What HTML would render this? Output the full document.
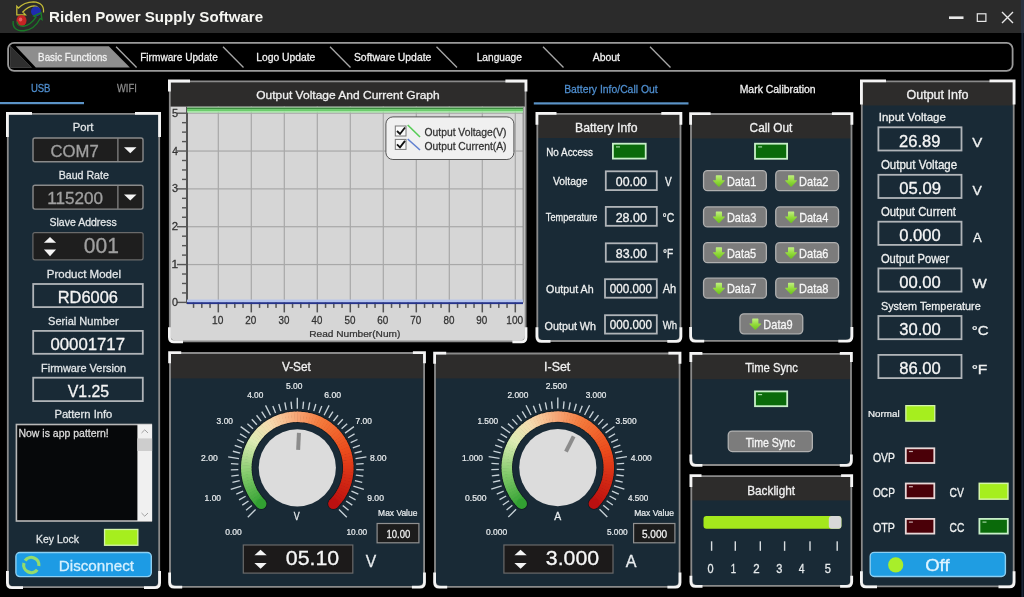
<!DOCTYPE html>
<html><head><meta charset="utf-8"><title>Riden Power Supply Software</title>
<style>html,body{margin:0;padding:0;background:#000;width:1024px;height:597px;overflow:hidden}
svg{display:block;will-change:transform} text{font-family:"Liberation Sans",sans-serif}</style></head>
<body><svg width="1024" height="597" viewBox="0 0 1024 597">
<defs><linearGradient id="garr" x1="0" y1="0" x2="0" y2="1"><stop offset="0" stop-color="#c0f080"/><stop offset="0.5" stop-color="#94dc3c"/><stop offset="1" stop-color="#6cc020"/></linearGradient></defs>
<rect x="0.00" y="0.00" width="1024.00" height="597.00" fill="#000"/>
<rect x="0.00" y="0.00" width="1024.00" height="33.00" fill="#2b2b2b"/>
<rect x="1021.00" y="33.00" width="3.00" height="564.00" fill="#0c1420"/>
<rect x="1021.00" y="0.00" width="3.00" height="33.00" fill="#2a3240"/>
<rect x="1022.00" y="33.00" width="1.00" height="564.00" fill="#1a2434"/>
<g fill="none">
<path d="M43.5,12.5 Q44.5,2.5 33.5,1.8 Q24,2 18.5,8 L16.8,6.2 L16.8,14.8 L25.5,14.8 L22.8,12 Q28,6.2 34,5.8 Q39.5,6 39.8,12.5" stroke="#c4bc38" stroke-width="1.25"/>
<circle cx="36" cy="11.5" r="5" fill="#1e2cb0"/>
<ellipse cx="21.5" cy="20.5" rx="5" ry="5.5" fill="#c42424"/><ellipse cx="20.5" cy="19.5" rx="1.8" ry="2" fill="#e86060"/>
<path d="M13.2,21 Q12,31 24,30.8 Q34.5,29.5 40.2,18.5 L42,19.6 L41,12.8 L33.8,16 L36,17.2 Q30.5,25.5 23.5,26.3 Q17.5,26.5 17,21.5" stroke="#1a7a28" stroke-width="1.4"/>
</g>
<rect x="949.00" y="16.40" width="14.50" height="2.60" fill="#e8e8e8"/>
<rect x="977.30" y="13.80" width="8.60" height="7.60" fill="none" stroke="#e8e8e8" stroke-width="1.2"/>
<path d="M1002,12 L1013,23 M1013,12 L1002,23" fill="none" stroke="#e8e8e8" stroke-width="1.4"/>
<rect x="8.10" y="42.80" width="1004.50" height="28.00" rx="6" fill="none" stroke="#9a9a9a" stroke-width="1.8"/>
<path d="M10.4,46.2 L10.4,67.5 L31.5,67.5 Z" fill="#2e2e2e" stroke="#555" stroke-width="0.6"/>
<path d="M15.8,46.2 L108.8,46.2 L129.9,67.5 L35.8,67.5 Z" fill="#8e8e8e"/>
<path d="M116.1,46.7 L136.6,67.5" fill="none" stroke="#a8a8a8" stroke-width="1.3"/>
<path d="M223,46.7 L243.5,67.5" fill="none" stroke="#a8a8a8" stroke-width="1.3"/>
<path d="M330,46.7 L350.5,67.5" fill="none" stroke="#a8a8a8" stroke-width="1.3"/>
<path d="M436.5,46.7 L457.0,67.5" fill="none" stroke="#a8a8a8" stroke-width="1.3"/>
<path d="M543,46.7 L563.5,67.5" fill="none" stroke="#a8a8a8" stroke-width="1.3"/>
<path d="M650,46.7 L670.5,67.5" fill="none" stroke="#a8a8a8" stroke-width="1.3"/>
<rect x="0.00" y="102.00" width="84.00" height="2.20" fill="#5b93c7"/>
<path d="M7.8,113.8 L159.2,113.8 L159.2,581.2 Q159.2,587.2 153.2,587.2 L13.8,587.2 Q7.8,587.2 7.8,581.2 Z" fill="#192a36"/>
<path d="M7.8,113.8 L159.2,113.8 L159.2,581.2 Q159.2,587.2 153.2,587.2 L13.8,587.2 Q7.8,587.2 7.8,581.2 Z" fill="none" stroke="#8a8a8a" stroke-width="1.8"/>
<path d="M7.4,137 L7.4,113.4 L32,113.4" fill="none" stroke="#f4f4f4" stroke-width="2.8"/>
<path d="M135,113.4 L159.6,113.4 L159.6,137" fill="none" stroke="#f4f4f4" stroke-width="2.8"/>
<path d="M7.4,571 L7.4,583 Q7.4,587.6 12,587.6 L23,587.6" fill="none" stroke="#f4f4f4" stroke-width="2.8"/>
<path d="M144,587.6 L155,587.6 Q159.6,587.6 159.6,583 L159.6,571" fill="none" stroke="#f4f4f4" stroke-width="2.8"/>
<rect x="33.00" y="138.00" width="110.00" height="23.80" rx="2" fill="#1e1e1e" stroke="#8a8a8a" stroke-width="1.4"/>
<rect x="117.30" y="138.30" width="1.20" height="23.20" fill="#8a8a8a"/>
<path d="M124,147.3 L136.5,147.3 L130.25,153.3 Z" fill="#f4f4f4"/>
<rect x="33.00" y="185.30" width="110.00" height="23.80" rx="2" fill="#1e1e1e" stroke="#8a8a8a" stroke-width="1.4"/>
<rect x="117.30" y="185.60" width="1.20" height="23.20" fill="#8a8a8a"/>
<path d="M124,194.6 L136.5,194.6 L130.25,200.6 Z" fill="#f4f4f4"/>
<rect x="32.90" y="232.60" width="110.20" height="27.20" rx="2" fill="#1e1e1e" stroke="#6a6a6a" stroke-width="1.2"/>
<path d="M43.9,242.8 L56.1,242.8 L50,237 Z" fill="#f4f4f4"/>
<path d="M43.9,249.5 L56.1,249.5 L50,256.2 Z" fill="#f4f4f4"/>
<rect x="33.20" y="284.00" width="109.60" height="23.10" fill="none" stroke="#b0b4b8" stroke-width="1.8"/>
<rect x="33.20" y="330.90" width="109.60" height="22.90" fill="none" stroke="#b0b4b8" stroke-width="1.8"/>
<rect x="33.20" y="377.70" width="109.60" height="23.40" fill="none" stroke="#b0b4b8" stroke-width="1.8"/>
<rect x="16.40" y="424.50" width="134.90" height="96.50" fill="#06080a" stroke="#b8b8b8" stroke-width="1.6"/>
<rect x="137.40" y="424.50" width="14.70" height="96.50" fill="#f0f0f0"/>
<rect x="137.40" y="438.40" width="14.70" height="12.60" fill="#cdcdcd"/>
<path d="M141.5,433 L144.75,429.8 L148,433" fill="none" stroke="#a0a0a0" stroke-width="1"/>
<path d="M141.5,513 L144.75,516.2 L148,513" fill="none" stroke="#a0a0a0" stroke-width="1"/>
<rect x="104.55" y="529.45" width="33.30" height="15.80" fill="#a6ee1e" stroke="#d4f4a8" stroke-width="1.3"/>
<rect x="15.90" y="552.50" width="135.40" height="24.10" rx="4" fill="#1d9be4" stroke="#8ccff2" stroke-width="1.4"/>
<path d="M25.07,560.64 A7.6,7.6 0 0 1 38.83,566.06" fill="none" stroke="#94dc6c" stroke-width="3.2"/>
<path d="M37.29,569.68 A7.6,7.6 0 0 1 23.96,563.03" fill="none" stroke="#94dc6c" stroke-width="3.2"/>
<path d="M169.8,81.39999999999999 L525.6,81.39999999999999 L525.6,335.4 Q525.6,341.4 519.6,341.4 L175.8,341.4 Q169.8,341.4 169.8,335.4 Z" fill="#d6d6d6"/>
<rect x="169.80" y="81.40" width="355.80" height="25.20" fill="#2d2c2b"/>
<path d="M169.8,81.39999999999999 L525.6,81.39999999999999 L525.6,335.4 Q525.6,341.4 519.6,341.4 L175.8,341.4 Q169.8,341.4 169.8,335.4 Z" fill="none" stroke="#8a8a8a" stroke-width="1.8"/>
<path d="M169.4,91.6 L169.4,81.0 L190,81.0" fill="none" stroke="#f4f4f4" stroke-width="2.8"/>
<path d="M505.4,81.0 L526.0,81.0 L526.0,91.6" fill="none" stroke="#f4f4f4" stroke-width="2.8"/>
<path d="M169.4,327.2 L169.4,337.2 Q169.4,341.8 174,341.8 L183,341.8" fill="none" stroke="#f4f4f4" stroke-width="2.8"/>
<path d="M512.4,341.8 L521.4,341.8 Q526.0,341.8 526.0,337.2 L526.0,327.2" fill="none" stroke="#f4f4f4" stroke-width="2.8"/>
<rect x="217.70" y="106.60" width="1.20" height="195.80" fill="#a8a8a8"/>
<rect x="250.70" y="106.60" width="1.20" height="195.80" fill="#a8a8a8"/>
<rect x="283.70" y="106.60" width="1.20" height="195.80" fill="#a8a8a8"/>
<rect x="316.70" y="106.60" width="1.20" height="195.80" fill="#a8a8a8"/>
<rect x="349.70" y="106.60" width="1.20" height="195.80" fill="#a8a8a8"/>
<rect x="382.70" y="106.60" width="1.20" height="195.80" fill="#a8a8a8"/>
<rect x="415.70" y="106.60" width="1.20" height="195.80" fill="#a8a8a8"/>
<rect x="448.70" y="106.60" width="1.20" height="195.80" fill="#a8a8a8"/>
<rect x="481.70" y="106.60" width="1.20" height="195.80" fill="#a8a8a8"/>
<rect x="514.70" y="106.60" width="1.20" height="195.80" fill="#a8a8a8"/>
<rect x="187.00" y="263.96" width="336.00" height="1.20" fill="#a8a8a8"/>
<rect x="187.00" y="226.12" width="336.00" height="1.20" fill="#a8a8a8"/>
<rect x="187.00" y="188.28" width="336.00" height="1.20" fill="#a8a8a8"/>
<rect x="187.00" y="150.44" width="336.00" height="1.20" fill="#a8a8a8"/>
<rect x="187.00" y="112.60" width="336.00" height="1.20" fill="#a8a8a8"/>
<rect x="522.60" y="106.60" width="1.20" height="196.00" fill="#8a8a8a"/>
<rect x="186.00" y="106.60" width="2.00" height="197.00" fill="#555"/>
<rect x="177.00" y="301.70" width="10.00" height="1.40" fill="#555"/>
<rect x="182.00" y="292.24" width="5.00" height="1.40" fill="#555"/>
<rect x="182.00" y="282.78" width="5.00" height="1.40" fill="#555"/>
<rect x="182.00" y="273.32" width="5.00" height="1.40" fill="#555"/>
<rect x="177.00" y="263.86" width="10.00" height="1.40" fill="#555"/>
<rect x="182.00" y="254.40" width="5.00" height="1.40" fill="#555"/>
<rect x="182.00" y="244.94" width="5.00" height="1.40" fill="#555"/>
<rect x="182.00" y="235.48" width="5.00" height="1.40" fill="#555"/>
<rect x="177.00" y="226.02" width="10.00" height="1.40" fill="#555"/>
<rect x="182.00" y="216.56" width="5.00" height="1.40" fill="#555"/>
<rect x="182.00" y="207.10" width="5.00" height="1.40" fill="#555"/>
<rect x="182.00" y="197.64" width="5.00" height="1.40" fill="#555"/>
<rect x="177.00" y="188.18" width="10.00" height="1.40" fill="#555"/>
<rect x="182.00" y="178.72" width="5.00" height="1.40" fill="#555"/>
<rect x="182.00" y="169.26" width="5.00" height="1.40" fill="#555"/>
<rect x="182.00" y="159.80" width="5.00" height="1.40" fill="#555"/>
<rect x="177.00" y="150.34" width="10.00" height="1.40" fill="#555"/>
<rect x="182.00" y="140.88" width="5.00" height="1.40" fill="#555"/>
<rect x="182.00" y="131.42" width="5.00" height="1.40" fill="#555"/>
<rect x="182.00" y="121.96" width="5.00" height="1.40" fill="#555"/>
<rect x="177.00" y="112.50" width="10.00" height="1.40" fill="#555"/>
<rect x="192.80" y="302.40" width="1.50" height="5.50" fill="#555"/>
<rect x="201.05" y="302.40" width="1.50" height="5.50" fill="#555"/>
<rect x="209.30" y="302.40" width="1.50" height="5.50" fill="#555"/>
<rect x="217.55" y="302.40" width="1.50" height="10.00" fill="#555"/>
<rect x="225.80" y="302.40" width="1.50" height="5.50" fill="#555"/>
<rect x="234.05" y="302.40" width="1.50" height="5.50" fill="#555"/>
<rect x="242.30" y="302.40" width="1.50" height="5.50" fill="#555"/>
<rect x="250.55" y="302.40" width="1.50" height="10.00" fill="#555"/>
<rect x="258.80" y="302.40" width="1.50" height="5.50" fill="#555"/>
<rect x="267.05" y="302.40" width="1.50" height="5.50" fill="#555"/>
<rect x="275.30" y="302.40" width="1.50" height="5.50" fill="#555"/>
<rect x="283.55" y="302.40" width="1.50" height="10.00" fill="#555"/>
<rect x="291.80" y="302.40" width="1.50" height="5.50" fill="#555"/>
<rect x="300.05" y="302.40" width="1.50" height="5.50" fill="#555"/>
<rect x="308.30" y="302.40" width="1.50" height="5.50" fill="#555"/>
<rect x="316.55" y="302.40" width="1.50" height="10.00" fill="#555"/>
<rect x="324.80" y="302.40" width="1.50" height="5.50" fill="#555"/>
<rect x="333.05" y="302.40" width="1.50" height="5.50" fill="#555"/>
<rect x="341.30" y="302.40" width="1.50" height="5.50" fill="#555"/>
<rect x="349.55" y="302.40" width="1.50" height="10.00" fill="#555"/>
<rect x="357.80" y="302.40" width="1.50" height="5.50" fill="#555"/>
<rect x="366.05" y="302.40" width="1.50" height="5.50" fill="#555"/>
<rect x="374.30" y="302.40" width="1.50" height="5.50" fill="#555"/>
<rect x="382.55" y="302.40" width="1.50" height="10.00" fill="#555"/>
<rect x="390.80" y="302.40" width="1.50" height="5.50" fill="#555"/>
<rect x="399.05" y="302.40" width="1.50" height="5.50" fill="#555"/>
<rect x="407.30" y="302.40" width="1.50" height="5.50" fill="#555"/>
<rect x="415.55" y="302.40" width="1.50" height="10.00" fill="#555"/>
<rect x="423.80" y="302.40" width="1.50" height="5.50" fill="#555"/>
<rect x="432.05" y="302.40" width="1.50" height="5.50" fill="#555"/>
<rect x="440.30" y="302.40" width="1.50" height="5.50" fill="#555"/>
<rect x="448.55" y="302.40" width="1.50" height="10.00" fill="#555"/>
<rect x="456.80" y="302.40" width="1.50" height="5.50" fill="#555"/>
<rect x="465.05" y="302.40" width="1.50" height="5.50" fill="#555"/>
<rect x="473.30" y="302.40" width="1.50" height="5.50" fill="#555"/>
<rect x="481.55" y="302.40" width="1.50" height="10.00" fill="#555"/>
<rect x="489.80" y="302.40" width="1.50" height="5.50" fill="#555"/>
<rect x="498.05" y="302.40" width="1.50" height="5.50" fill="#555"/>
<rect x="506.30" y="302.40" width="1.50" height="5.50" fill="#555"/>
<rect x="514.55" y="302.40" width="1.50" height="10.00" fill="#555"/>
<rect x="187.00" y="106.80" width="336.00" height="1.20" fill="#9cc49c"/>
<rect x="187.00" y="107.80" width="336.00" height="1.30" fill="#3c8c40"/>
<rect x="187.00" y="109.10" width="336.00" height="2.00" fill="#6ccc6c"/>
<rect x="187.00" y="111.10" width="336.00" height="1.50" fill="#a4e8a4"/>
<rect x="187.00" y="299.60" width="336.00" height="2.80" fill="#b4c4ee"/>
<rect x="187.00" y="302.20" width="336.00" height="1.90" fill="#26348c"/>
<rect x="385.90" y="116.90" width="128.00" height="42.60" rx="7" fill="#f0f0f0" stroke="#555" stroke-width="1"/>
<rect x="395.30" y="126.00" width="10.70" height="10.00" fill="#fafafa" stroke="#777" stroke-width="1"/>
<path d="M397,131.0 L400,134.0 L405,127.5" fill="none" stroke="#111" stroke-width="1.8"/>
<rect x="395.30" y="139.40" width="10.70" height="10.00" fill="#fafafa" stroke="#777" stroke-width="1"/>
<path d="M397,144.4 L400,147.4 L405,140.9" fill="none" stroke="#111" stroke-width="1.8"/>
<path d="M407.7,125 L420,137" fill="none" stroke="#55cc55" stroke-width="1.6"/>
<path d="M407.7,139 L420,150" fill="none" stroke="#6080d0" stroke-width="1.6"/>
<path d="M537.3,113.8 L680.5,113.8 L680.5,335.0 Q680.5,341.0 674.5,341.0 L543.3,341.0 Q537.3,341.0 537.3,335.0 Z" fill="#192a36"/>
<rect x="537.30" y="113.80" width="143.20" height="24.20" fill="#2d2c2b"/>
<path d="M537.3,113.8 L680.5,113.8 L680.5,335.0 Q680.5,341.0 674.5,341.0 L543.3,341.0 Q537.3,341.0 537.3,335.0 Z" fill="none" stroke="#8a8a8a" stroke-width="1.8"/>
<path d="M536.9,124.7 L536.9,113.4 L556.5,113.4" fill="none" stroke="#f4f4f4" stroke-width="2.8"/>
<path d="M661.3,113.4 L680.9,113.4 L680.9,124.7" fill="none" stroke="#f4f4f4" stroke-width="2.8"/>
<path d="M536.9,327.2 L536.9,336.8 Q536.9,341.40000000000003 541.5,341.40000000000003 L550.5,341.40000000000003" fill="none" stroke="#f4f4f4" stroke-width="2.8"/>
<path d="M667.3,341.40000000000003 L676.3,341.40000000000003 Q680.9,341.40000000000003 680.9,336.8 L680.9,327.2" fill="none" stroke="#f4f4f4" stroke-width="2.8"/>
<rect x="612.90" y="143.70" width="32.80" height="14.90" fill="#0a6a0a" stroke="#c8f0c8" stroke-width="1.8"/>
<rect x="616.00" y="146.30" width="4.00" height="1.20" fill="#c8f0c8" opacity="0.8"/>
<rect x="605.80" y="171.30" width="51.00" height="18.80" fill="none" stroke="#b0b4b8" stroke-width="1.8"/>
<rect x="605.80" y="206.90" width="51.00" height="18.90" fill="none" stroke="#b0b4b8" stroke-width="1.8"/>
<rect x="605.80" y="243.30" width="51.00" height="18.40" fill="none" stroke="#b0b4b8" stroke-width="1.8"/>
<rect x="605.00" y="279.20" width="51.80" height="18.50" fill="none" stroke="#b0b4b8" stroke-width="1.8"/>
<rect x="605.00" y="315.20" width="51.80" height="18.40" fill="none" stroke="#b0b4b8" stroke-width="1.8"/>
<path d="M691.0,114.0 L851.5,114.0 L851.5,334.8 Q851.5,340.8 845.5,340.8 L697.0,340.8 Q691.0,340.8 691.0,334.8 Z" fill="#192a36"/>
<rect x="691.00" y="114.00" width="160.50" height="24.50" fill="#2d2c2b"/>
<path d="M691.0,114.0 L851.5,114.0 L851.5,334.8 Q851.5,340.8 845.5,340.8 L697.0,340.8 Q691.0,340.8 691.0,334.8 Z" fill="none" stroke="#8a8a8a" stroke-width="1.8"/>
<path d="M690.6,124.8 L690.6,113.60000000000001 L710.6,113.60000000000001" fill="none" stroke="#f4f4f4" stroke-width="2.8"/>
<path d="M831.9,113.60000000000001 L851.9,113.60000000000001 L851.9,124.8" fill="none" stroke="#f4f4f4" stroke-width="2.8"/>
<path d="M690.6,327.0 L690.6,336.6 Q690.6,341.20000000000005 695.2,341.20000000000005 L704.2,341.20000000000005" fill="none" stroke="#f4f4f4" stroke-width="2.8"/>
<path d="M838.3,341.20000000000005 L847.3,341.20000000000005 Q851.9,341.20000000000005 851.9,336.6 L851.9,327.0" fill="none" stroke="#f4f4f4" stroke-width="2.8"/>
<rect x="755.00" y="143.70" width="32.10" height="15.10" fill="#0a6a0a" stroke="#c8f0c8" stroke-width="1.8"/>
<rect x="758.10" y="146.30" width="4.00" height="1.20" fill="#c8f0c8" opacity="0.8"/>
<rect x="703.55" y="170.65" width="62.80" height="20.00" rx="4" fill="#7c7c7c" stroke="#b0b0b0" stroke-width="1.3"/>
<path d="M715.8,175.8 Q715.8,175.3 716.4,175.3 L721.4,175.3 Q722.0,175.3 722.0,175.8 L722.0,180.2 L724.5,180.2 Q725.1999999999999,180.4 724.6999999999999,181 L719.5,186.4 Q718.9,187 718.3,186.4 L713.1,181 Q712.6,180.4 713.3,180.2 L715.8,180.2 Z" fill="url(#garr)"/>
<rect x="775.75" y="170.65" width="62.80" height="20.00" rx="4" fill="#7c7c7c" stroke="#b0b0b0" stroke-width="1.3"/>
<path d="M788.0,175.8 Q788.0,175.3 788.6,175.3 L793.6,175.3 Q794.2,175.3 794.2,175.8 L794.2,180.2 L796.7,180.2 Q797.4,180.4 796.9,181 L791.7,186.4 Q791.1,187 790.5,186.4 L785.3000000000001,181 Q784.8000000000001,180.4 785.5,180.2 L788.0,180.2 Z" fill="url(#garr)"/>
<rect x="703.55" y="206.95" width="62.80" height="20.00" rx="4" fill="#7c7c7c" stroke="#b0b0b0" stroke-width="1.3"/>
<path d="M715.8,212.10000000000002 Q715.8,211.60000000000002 716.4,211.60000000000002 L721.4,211.60000000000002 Q722.0,211.60000000000002 722.0,212.10000000000002 L722.0,216.5 L724.5,216.5 Q725.1999999999999,216.70000000000002 724.6999999999999,217.3 L719.5,222.70000000000002 Q718.9,223.3 718.3,222.70000000000002 L713.1,217.3 Q712.6,216.70000000000002 713.3,216.5 L715.8,216.5 Z" fill="url(#garr)"/>
<rect x="775.75" y="206.95" width="62.80" height="20.00" rx="4" fill="#7c7c7c" stroke="#b0b0b0" stroke-width="1.3"/>
<path d="M788.0,212.10000000000002 Q788.0,211.60000000000002 788.6,211.60000000000002 L793.6,211.60000000000002 Q794.2,211.60000000000002 794.2,212.10000000000002 L794.2,216.5 L796.7,216.5 Q797.4,216.70000000000002 796.9,217.3 L791.7,222.70000000000002 Q791.1,223.3 790.5,222.70000000000002 L785.3000000000001,217.3 Q784.8000000000001,216.70000000000002 785.5,216.5 L788.0,216.5 Z" fill="url(#garr)"/>
<rect x="703.55" y="242.65" width="62.80" height="20.00" rx="4" fill="#7c7c7c" stroke="#b0b0b0" stroke-width="1.3"/>
<path d="M715.8,247.8 Q715.8,247.3 716.4,247.3 L721.4,247.3 Q722.0,247.3 722.0,247.8 L722.0,252.2 L724.5,252.2 Q725.1999999999999,252.4 724.6999999999999,253 L719.5,258.4 Q718.9,259 718.3,258.4 L713.1,253 Q712.6,252.4 713.3,252.2 L715.8,252.2 Z" fill="url(#garr)"/>
<rect x="775.75" y="242.65" width="62.80" height="20.00" rx="4" fill="#7c7c7c" stroke="#b0b0b0" stroke-width="1.3"/>
<path d="M788.0,247.8 Q788.0,247.3 788.6,247.3 L793.6,247.3 Q794.2,247.3 794.2,247.8 L794.2,252.2 L796.7,252.2 Q797.4,252.4 796.9,253 L791.7,258.4 Q791.1,259 790.5,258.4 L785.3000000000001,253 Q784.8000000000001,252.4 785.5,252.2 L788.0,252.2 Z" fill="url(#garr)"/>
<rect x="703.55" y="278.15" width="62.80" height="20.00" rx="4" fill="#7c7c7c" stroke="#b0b0b0" stroke-width="1.3"/>
<path d="M715.8,283.3 Q715.8,282.8 716.4,282.8 L721.4,282.8 Q722.0,282.8 722.0,283.3 L722.0,287.7 L724.5,287.7 Q725.1999999999999,287.9 724.6999999999999,288.5 L719.5,293.9 Q718.9,294.5 718.3,293.9 L713.1,288.5 Q712.6,287.9 713.3,287.7 L715.8,287.7 Z" fill="url(#garr)"/>
<rect x="775.75" y="278.15" width="62.80" height="20.00" rx="4" fill="#7c7c7c" stroke="#b0b0b0" stroke-width="1.3"/>
<path d="M788.0,283.3 Q788.0,282.8 788.6,282.8 L793.6,282.8 Q794.2,282.8 794.2,283.3 L794.2,287.7 L796.7,287.7 Q797.4,287.9 796.9,288.5 L791.7,293.9 Q791.1,294.5 790.5,293.9 L785.3000000000001,288.5 Q784.8000000000001,287.9 785.5,287.7 L788.0,287.7 Z" fill="url(#garr)"/>
<rect x="739.95" y="313.85" width="62.80" height="20.00" rx="4" fill="#7c7c7c" stroke="#b0b0b0" stroke-width="1.3"/>
<path d="M752.1999999999999,319.0 Q752.1999999999999,318.5 752.8,318.5 L757.8,318.5 Q758.4,318.5 758.4,319.0 L758.4,323.4 L760.9,323.4 Q761.5999999999999,323.59999999999997 761.0999999999999,324.2 L755.9,329.59999999999997 Q755.3,330.2 754.6999999999999,329.59999999999997 L749.5,324.2 Q749.0,323.59999999999997 749.6999999999999,323.4 L752.1999999999999,323.4 Z" fill="url(#garr)"/>
<path d="M691.1999999999999,353.8 L851.0,353.8 L851.0,459.0 Q851.0,465.0 845.0,465.0 L697.1999999999999,465.0 Q691.1999999999999,465.0 691.1999999999999,459.0 Z" fill="#192a36"/>
<rect x="691.20" y="353.80" width="159.80" height="25.40" fill="#2d2c2b"/>
<path d="M691.1999999999999,353.8 L851.0,353.8 L851.0,459.0 Q851.0,465.0 845.0,465.0 L697.1999999999999,465.0 Q691.1999999999999,465.0 691.1999999999999,459.0 Z" fill="none" stroke="#8a8a8a" stroke-width="1.8"/>
<path d="M690.8,362 L690.8,353.4 L702.4,353.4" fill="none" stroke="#f4f4f4" stroke-width="2.8"/>
<path d="M839.8,353.4 L851.4,353.4 L851.4,362" fill="none" stroke="#f4f4f4" stroke-width="2.8"/>
<path d="M690.8,454.40000000000003 L690.8,460.8 Q690.8,465.40000000000003 695.4,465.40000000000003 L702.4,465.40000000000003" fill="none" stroke="#f4f4f4" stroke-width="2.8"/>
<path d="M839.8,465.40000000000003 L846.8,465.40000000000003 Q851.4,465.40000000000003 851.4,460.8 L851.4,454.40000000000003" fill="none" stroke="#f4f4f4" stroke-width="2.8"/>
<rect x="755.00" y="391.40" width="32.20" height="14.80" fill="#0a6a0a" stroke="#c8f0c8" stroke-width="1.8"/>
<rect x="758.10" y="394.00" width="4.00" height="1.20" fill="#c8f0c8" opacity="0.8"/>
<rect x="728.25" y="431.05" width="84.10" height="20.50" rx="4" fill="#7c7c7c" stroke="#b0b0b0" stroke-width="1.3"/>
<path d="M691.3,476.1 L851.3000000000001,476.1 L851.3000000000001,579.9000000000001 Q851.3000000000001,585.9000000000001 845.3000000000001,585.9000000000001 L697.3,585.9000000000001 Q691.3,585.9000000000001 691.3,579.9000000000001 Z" fill="#192a36"/>
<rect x="691.30" y="476.10" width="160.00" height="24.30" fill="#2d2c2b"/>
<path d="M691.3,476.1 L851.3000000000001,476.1 L851.3000000000001,579.9000000000001 Q851.3000000000001,585.9000000000001 845.3000000000001,585.9000000000001 L697.3,585.9000000000001 Q691.3,585.9000000000001 691.3,579.9000000000001 Z" fill="none" stroke="#8a8a8a" stroke-width="1.8"/>
<path d="M690.9,487.0 L690.9,475.7 L701.5,475.7" fill="none" stroke="#f4f4f4" stroke-width="2.8"/>
<path d="M841.1,475.7 L851.7,475.7 L851.7,487.0" fill="none" stroke="#f4f4f4" stroke-width="2.8"/>
<path d="M690.9,575.7 L690.9,581.7 Q690.9,586.3000000000001 695.5,586.3000000000001 L702.5,586.3000000000001" fill="none" stroke="#f4f4f4" stroke-width="2.8"/>
<path d="M840.1,586.3000000000001 L847.1,586.3000000000001 Q851.7,586.3000000000001 851.7,581.7 L851.7,575.7" fill="none" stroke="#f4f4f4" stroke-width="2.8"/>
<rect x="703.50" y="515.90" width="137.90" height="12.80" rx="3" fill="#a4e81c"/>
<rect x="828.80" y="515.90" width="12.60" height="12.80" rx="3" fill="#d8d8d8"/>
<rect x="710.90" y="541.30" width="1.40" height="9.50" fill="#d8dde0"/>
<rect x="734.60" y="541.30" width="1.40" height="9.50" fill="#d8dde0"/>
<rect x="759.60" y="541.30" width="1.40" height="9.50" fill="#d8dde0"/>
<rect x="783.90" y="541.30" width="1.40" height="9.50" fill="#d8dde0"/>
<rect x="809.30" y="541.30" width="1.40" height="9.50" fill="#d8dde0"/>
<rect x="836.50" y="541.30" width="1.40" height="9.50" fill="#d8dde0"/>
<path d="M861.8,81.3 L1013.7,81.3 L1013.7,580.4000000000001 Q1013.7,586.4000000000001 1007.7,586.4000000000001 L867.8,586.4000000000001 Q861.8,586.4000000000001 861.8,580.4000000000001 Z" fill="#192a36"/>
<rect x="861.80" y="81.30" width="151.90" height="24.20" fill="#2d2c2b"/>
<path d="M861.8,81.3 L1013.7,81.3 L1013.7,580.4000000000001 Q1013.7,586.4000000000001 1007.7,586.4000000000001 L867.8,586.4000000000001 Q861.8,586.4000000000001 861.8,580.4000000000001 Z" fill="none" stroke="#8a8a8a" stroke-width="1.8"/>
<path d="M861.4,104.5 L861.4,80.9 L886,80.9" fill="none" stroke="#f4f4f4" stroke-width="2.8"/>
<path d="M989.5,80.9 L1014.1,80.9 L1014.1,104.5" fill="none" stroke="#f4f4f4" stroke-width="2.8"/>
<path d="M861.4,571.2 L861.4,582.2 Q861.4,586.8000000000001 866,586.8000000000001 L877,586.8000000000001" fill="none" stroke="#f4f4f4" stroke-width="2.8"/>
<path d="M998.5,586.8000000000001 L1009.5,586.8000000000001 Q1014.1,586.8000000000001 1014.1,582.2 L1014.1,571.2" fill="none" stroke="#f4f4f4" stroke-width="2.8"/>
<rect x="878.40" y="127.30" width="83.10" height="23.20" fill="none" stroke="#b0b4b8" stroke-width="1.8"/>
<rect x="878.40" y="174.80" width="83.10" height="23.20" fill="none" stroke="#b0b4b8" stroke-width="1.8"/>
<rect x="878.40" y="221.70" width="83.10" height="23.20" fill="none" stroke="#b0b4b8" stroke-width="1.8"/>
<rect x="878.40" y="268.40" width="83.10" height="23.20" fill="none" stroke="#b0b4b8" stroke-width="1.8"/>
<rect x="878.40" y="316.00" width="83.10" height="23.20" fill="none" stroke="#b0b4b8" stroke-width="1.8"/>
<rect x="878.40" y="354.90" width="83.10" height="23.20" fill="none" stroke="#b0b4b8" stroke-width="1.8"/>
<rect x="905.85" y="405.65" width="28.90" height="15.50" fill="#a6ee1e" stroke="#d4f4a8" stroke-width="1.3"/>
<rect x="905.80" y="448.30" width="28.50" height="14.70" fill="#4a0008" stroke="#e8d8d8" stroke-width="1.8"/>
<rect x="908.90" y="450.90" width="4.00" height="1.20" fill="#e8d8d8" opacity="0.8"/>
<rect x="905.80" y="483.50" width="28.50" height="14.70" fill="#4a0008" stroke="#e8d8d8" stroke-width="1.8"/>
<rect x="908.90" y="486.10" width="4.00" height="1.20" fill="#e8d8d8" opacity="0.8"/>
<rect x="905.80" y="518.90" width="28.50" height="14.70" fill="#4a0008" stroke="#e8d8d8" stroke-width="1.8"/>
<rect x="908.90" y="521.50" width="4.00" height="1.20" fill="#e8d8d8" opacity="0.8"/>
<rect x="979.25" y="483.35" width="28.70" height="15.80" fill="#a6ee1e" stroke="#d4f4a8" stroke-width="1.5"/>
<rect x="979.40" y="518.90" width="28.40" height="14.70" fill="#0a6a0a" stroke="#c8f0c8" stroke-width="1.8"/>
<rect x="982.50" y="521.50" width="4.00" height="1.20" fill="#c8f0c8" opacity="0.8"/>
<rect x="870.20" y="552.40" width="135.20" height="24.10" rx="4" fill="#1f9de2" stroke="#8ccff2" stroke-width="1.4"/>
<circle cx="895.7" cy="564.9" r="7.6" fill="#a8ee2a"/>
<path d="M170.0,353.0 L424.09999999999997,353.0 L424.09999999999997,580.8000000000001 Q424.09999999999997,586.8000000000001 418.09999999999997,586.8000000000001 L176.0,586.8000000000001 Q170.0,586.8000000000001 170.0,580.8000000000001 Z" fill="#192a36"/>
<rect x="170.00" y="353.00" width="254.10" height="25.40" fill="#2d2c2b"/>
<path d="M170.0,353.0 L424.09999999999997,353.0 L424.09999999999997,580.8000000000001 Q424.09999999999997,586.8000000000001 418.09999999999997,586.8000000000001 L176.0,586.8000000000001 Q170.0,586.8000000000001 170.0,580.8000000000001 Z" fill="none" stroke="#8a8a8a" stroke-width="1.8"/>
<path d="M169.6,363.2 L169.6,352.59999999999997 L181.2,352.59999999999997" fill="none" stroke="#f4f4f4" stroke-width="2.8"/>
<path d="M412.9,352.59999999999997 L424.5,352.59999999999997 L424.5,363.2" fill="none" stroke="#f4f4f4" stroke-width="2.8"/>
<path d="M169.6,572.6 L169.6,582.6 Q169.6,587.2 174.2,587.2 L182.2,587.2" fill="none" stroke="#f4f4f4" stroke-width="2.8"/>
<path d="M411.9,587.2 L419.9,587.2 Q424.5,587.2 424.5,582.6 L424.5,572.6" fill="none" stroke="#f4f4f4" stroke-width="2.8"/>
<line x1="255.58" y1="509.52" x2="247.80" y2="517.30" stroke="#c8d2d8" stroke-width="1.35"/>
<line x1="251.84" y1="505.41" x2="246.06" y2="510.19" stroke="#c8d2d8" stroke-width="1.35"/>
<line x1="248.50" y1="500.96" x2="242.30" y2="505.18" stroke="#c8d2d8" stroke-width="1.35"/>
<line x1="245.60" y1="496.22" x2="239.03" y2="499.84" stroke="#c8d2d8" stroke-width="1.35"/>
<line x1="243.15" y1="491.23" x2="236.27" y2="494.21" stroke="#c8d2d8" stroke-width="1.35"/>
<line x1="241.19" y1="486.03" x2="230.73" y2="489.43" stroke="#c8d2d8" stroke-width="1.35"/>
<line x1="239.72" y1="480.67" x2="232.40" y2="482.31" stroke="#c8d2d8" stroke-width="1.35"/>
<line x1="238.77" y1="475.19" x2="231.32" y2="476.13" stroke="#c8d2d8" stroke-width="1.35"/>
<line x1="238.33" y1="469.65" x2="230.83" y2="469.89" stroke="#c8d2d8" stroke-width="1.35"/>
<line x1="238.42" y1="464.10" x2="230.93" y2="463.62" stroke="#c8d2d8" stroke-width="1.35"/>
<line x1="239.03" y1="458.57" x2="228.16" y2="456.85" stroke="#c8d2d8" stroke-width="1.35"/>
<line x1="240.15" y1="453.13" x2="232.89" y2="451.26" stroke="#c8d2d8" stroke-width="1.35"/>
<line x1="241.79" y1="447.81" x2="234.73" y2="445.27" stroke="#c8d2d8" stroke-width="1.35"/>
<line x1="243.92" y1="442.68" x2="237.13" y2="439.49" stroke="#c8d2d8" stroke-width="1.35"/>
<line x1="246.52" y1="437.77" x2="240.06" y2="433.95" stroke="#c8d2d8" stroke-width="1.35"/>
<line x1="249.57" y1="433.12" x2="240.67" y2="426.66" stroke="#c8d2d8" stroke-width="1.35"/>
<line x1="253.04" y1="428.78" x2="247.42" y2="423.82" stroke="#c8d2d8" stroke-width="1.35"/>
<line x1="256.91" y1="424.79" x2="251.78" y2="419.32" stroke="#c8d2d8" stroke-width="1.35"/>
<line x1="261.14" y1="421.18" x2="256.54" y2="415.25" stroke="#c8d2d8" stroke-width="1.35"/>
<line x1="265.69" y1="417.98" x2="261.67" y2="411.65" stroke="#c8d2d8" stroke-width="1.35"/>
<line x1="270.51" y1="415.23" x2="265.52" y2="405.43" stroke="#c8d2d8" stroke-width="1.35"/>
<line x1="275.58" y1="412.94" x2="272.82" y2="405.97" stroke="#c8d2d8" stroke-width="1.35"/>
<line x1="280.84" y1="411.14" x2="278.75" y2="403.94" stroke="#c8d2d8" stroke-width="1.35"/>
<line x1="286.24" y1="409.85" x2="284.84" y2="402.48" stroke="#c8d2d8" stroke-width="1.35"/>
<line x1="291.75" y1="409.06" x2="291.04" y2="401.60" stroke="#c8d2d8" stroke-width="1.35"/>
<line x1="297.30" y1="408.80" x2="297.30" y2="397.80" stroke="#c8d2d8" stroke-width="1.35"/>
<line x1="302.85" y1="409.06" x2="303.56" y2="401.60" stroke="#c8d2d8" stroke-width="1.35"/>
<line x1="308.36" y1="409.85" x2="309.76" y2="402.48" stroke="#c8d2d8" stroke-width="1.35"/>
<line x1="313.76" y1="411.14" x2="315.85" y2="403.94" stroke="#c8d2d8" stroke-width="1.35"/>
<line x1="319.02" y1="412.94" x2="321.78" y2="405.97" stroke="#c8d2d8" stroke-width="1.35"/>
<line x1="324.09" y1="415.23" x2="329.08" y2="405.43" stroke="#c8d2d8" stroke-width="1.35"/>
<line x1="328.91" y1="417.98" x2="332.93" y2="411.65" stroke="#c8d2d8" stroke-width="1.35"/>
<line x1="333.46" y1="421.18" x2="338.06" y2="415.25" stroke="#c8d2d8" stroke-width="1.35"/>
<line x1="337.69" y1="424.79" x2="342.82" y2="419.32" stroke="#c8d2d8" stroke-width="1.35"/>
<line x1="341.56" y1="428.78" x2="347.18" y2="423.82" stroke="#c8d2d8" stroke-width="1.35"/>
<line x1="345.03" y1="433.12" x2="353.93" y2="426.66" stroke="#c8d2d8" stroke-width="1.35"/>
<line x1="348.08" y1="437.77" x2="354.54" y2="433.95" stroke="#c8d2d8" stroke-width="1.35"/>
<line x1="350.68" y1="442.68" x2="357.47" y2="439.49" stroke="#c8d2d8" stroke-width="1.35"/>
<line x1="352.81" y1="447.81" x2="359.87" y2="445.27" stroke="#c8d2d8" stroke-width="1.35"/>
<line x1="354.45" y1="453.13" x2="361.71" y2="451.26" stroke="#c8d2d8" stroke-width="1.35"/>
<line x1="355.57" y1="458.57" x2="366.44" y2="456.85" stroke="#c8d2d8" stroke-width="1.35"/>
<line x1="356.18" y1="464.10" x2="363.67" y2="463.62" stroke="#c8d2d8" stroke-width="1.35"/>
<line x1="356.27" y1="469.65" x2="363.77" y2="469.89" stroke="#c8d2d8" stroke-width="1.35"/>
<line x1="355.83" y1="475.19" x2="363.28" y2="476.13" stroke="#c8d2d8" stroke-width="1.35"/>
<line x1="354.88" y1="480.67" x2="362.20" y2="482.31" stroke="#c8d2d8" stroke-width="1.35"/>
<line x1="353.41" y1="486.03" x2="363.87" y2="489.43" stroke="#c8d2d8" stroke-width="1.35"/>
<line x1="351.45" y1="491.23" x2="358.33" y2="494.21" stroke="#c8d2d8" stroke-width="1.35"/>
<line x1="349.00" y1="496.22" x2="355.57" y2="499.84" stroke="#c8d2d8" stroke-width="1.35"/>
<line x1="346.10" y1="500.96" x2="352.30" y2="505.18" stroke="#c8d2d8" stroke-width="1.35"/>
<line x1="342.76" y1="505.41" x2="348.54" y2="510.19" stroke="#c8d2d8" stroke-width="1.35"/>
<line x1="339.02" y1="509.52" x2="346.80" y2="517.30" stroke="#c8d2d8" stroke-width="1.35"/>
<path d="M261.24,503.86 A51,51 0 1 1 333.36,503.86" fill="none" stroke="#111a20" stroke-width="12" stroke-linecap="round"/>
<path d="M261.24,503.86 A51,51 0 0 1 258.82,501.28" fill="none" stroke="#36a235" stroke-width="10.5"/>
<path d="M259.18,501.68 A51,51 0 0 1 256.92,498.95" fill="none" stroke="#3da63a" stroke-width="10.5"/>
<path d="M257.25,499.37 A51,51 0 0 1 255.16,496.52" fill="none" stroke="#44aa3f" stroke-width="10.5"/>
<path d="M255.46,496.96 A51,51 0 0 1 253.54,493.99" fill="none" stroke="#4cae44" stroke-width="10.5"/>
<path d="M253.82,494.45 A51,51 0 0 1 252.07,491.37" fill="none" stroke="#53b249" stroke-width="10.5"/>
<path d="M252.32,491.84 A51,51 0 0 1 250.76,488.67" fill="none" stroke="#5ab64e" stroke-width="10.5"/>
<path d="M250.98,489.15 A51,51 0 0 1 249.62,485.89" fill="none" stroke="#62ba54" stroke-width="10.5"/>
<path d="M249.81,486.39 A51,51 0 0 1 248.63,483.05" fill="none" stroke="#69bd59" stroke-width="10.5"/>
<path d="M248.80,483.56 A51,51 0 0 1 247.82,480.16" fill="none" stroke="#70c15e" stroke-width="10.5"/>
<path d="M247.95,480.68 A51,51 0 0 1 247.18,477.23" fill="none" stroke="#78c563" stroke-width="10.5"/>
<path d="M247.28,477.75 A51,51 0 0 1 246.71,474.26" fill="none" stroke="#7fc968" stroke-width="10.5"/>
<path d="M246.78,474.79 A51,51 0 0 1 246.42,471.27" fill="none" stroke="#86cd6e" stroke-width="10.5"/>
<path d="M246.46,471.80 A51,51 0 0 1 246.30,468.27" fill="none" stroke="#8ed074" stroke-width="10.5"/>
<path d="M246.31,468.80 A51,51 0 0 1 246.36,465.26" fill="none" stroke="#96d37b" stroke-width="10.5"/>
<path d="M246.34,465.80 A51,51 0 0 1 246.60,462.27" fill="none" stroke="#9ed581" stroke-width="10.5"/>
<path d="M246.55,462.80 A51,51 0 0 1 247.01,459.29" fill="none" stroke="#a6d888" stroke-width="10.5"/>
<path d="M246.93,459.82 A51,51 0 0 1 247.60,456.35" fill="none" stroke="#aedb8e" stroke-width="10.5"/>
<path d="M247.48,456.87 A51,51 0 0 1 248.36,453.44" fill="none" stroke="#b6de94" stroke-width="10.5"/>
<path d="M248.21,453.96 A51,51 0 0 1 249.29,450.59" fill="none" stroke="#bde19b" stroke-width="10.5"/>
<path d="M249.11,451.09 A51,51 0 0 1 250.39,447.79" fill="none" stroke="#c5e4a1" stroke-width="10.5"/>
<path d="M250.18,448.28 A51,51 0 0 1 251.65,445.06" fill="none" stroke="#cde7a8" stroke-width="10.5"/>
<path d="M251.41,445.54 A51,51 0 0 1 253.07,442.42" fill="none" stroke="#d5e9ae" stroke-width="10.5"/>
<path d="M252.80,442.88 A51,51 0 0 1 254.64,439.86" fill="none" stroke="#dcecb4" stroke-width="10.5"/>
<path d="M254.35,440.30 A51,51 0 0 1 256.36,437.39" fill="none" stroke="#e0eab3" stroke-width="10.5"/>
<path d="M256.04,437.82 A51,51 0 0 1 258.22,435.03" fill="none" stroke="#e3e8b3" stroke-width="10.5"/>
<path d="M257.88,435.45 A51,51 0 0 1 260.21,432.79" fill="none" stroke="#e6e6b2" stroke-width="10.5"/>
<path d="M259.85,433.18 A51,51 0 0 1 262.34,430.67" fill="none" stroke="#e9e4b2" stroke-width="10.5"/>
<path d="M261.95,431.04 A51,51 0 0 1 264.59,428.67" fill="none" stroke="#ede2b1" stroke-width="10.5"/>
<path d="M264.18,429.02 A51,51 0 0 1 266.95,426.82" fill="none" stroke="#f0e0b1" stroke-width="10.5"/>
<path d="M266.52,427.14 A51,51 0 0 1 269.41,425.10" fill="none" stroke="#f3deb0" stroke-width="10.5"/>
<path d="M268.97,425.40 A51,51 0 0 1 271.97,423.53" fill="none" stroke="#f6dbaf" stroke-width="10.5"/>
<path d="M271.51,423.80 A51,51 0 0 1 274.62,422.12" fill="none" stroke="#f6d6a9" stroke-width="10.5"/>
<path d="M274.15,422.36 A51,51 0 0 1 277.35,420.86" fill="none" stroke="#f6d0a3" stroke-width="10.5"/>
<path d="M276.86,421.07 A51,51 0 0 1 280.15,419.77" fill="none" stroke="#f6ca9d" stroke-width="10.5"/>
<path d="M279.65,419.95 A51,51 0 0 1 283.01,418.84" fill="none" stroke="#f6c496" stroke-width="10.5"/>
<path d="M282.50,419.00 A51,51 0 0 1 285.91,418.09" fill="none" stroke="#f6be90" stroke-width="10.5"/>
<path d="M285.39,418.21 A51,51 0 0 1 288.86,417.50" fill="none" stroke="#f6b88a" stroke-width="10.5"/>
<path d="M288.33,417.59 A51,51 0 0 1 291.84,417.09" fill="none" stroke="#f6b384" stroke-width="10.5"/>
<path d="M291.31,417.15 A51,51 0 0 1 294.83,416.86" fill="none" stroke="#f6ad7d" stroke-width="10.5"/>
<path d="M294.30,416.89 A51,51 0 0 1 297.83,416.80" fill="none" stroke="#f6a777" stroke-width="10.5"/>
<path d="M297.30,416.80 A51,51 0 0 1 300.84,416.92" fill="none" stroke="#f6a171" stroke-width="10.5"/>
<path d="M300.30,416.89 A51,51 0 0 1 303.82,417.22" fill="none" stroke="#f69c69" stroke-width="10.5"/>
<path d="M303.29,417.15 A51,51 0 0 1 306.79,417.69" fill="none" stroke="#f59762" stroke-width="10.5"/>
<path d="M306.27,417.59 A51,51 0 0 1 309.72,418.34" fill="none" stroke="#f5925c" stroke-width="10.5"/>
<path d="M309.21,418.21 A51,51 0 0 1 312.61,419.15" fill="none" stroke="#f58c54" stroke-width="10.5"/>
<path d="M312.10,419.00 A51,51 0 0 1 315.45,420.14" fill="none" stroke="#f5874e" stroke-width="10.5"/>
<path d="M314.95,419.95 A51,51 0 0 1 318.23,421.29" fill="none" stroke="#f48246" stroke-width="10.5"/>
<path d="M317.74,421.07 A51,51 0 0 1 320.93,422.60" fill="none" stroke="#f47d3f" stroke-width="10.5"/>
<path d="M320.45,422.36 A51,51 0 0 1 323.55,424.07" fill="none" stroke="#f4783b" stroke-width="10.5"/>
<path d="M323.09,423.80 A51,51 0 0 1 326.08,425.69" fill="none" stroke="#f37538" stroke-width="10.5"/>
<path d="M325.63,425.40 A51,51 0 0 1 328.51,427.46" fill="none" stroke="#f27136" stroke-width="10.5"/>
<path d="M328.08,427.14 A51,51 0 0 1 330.83,429.37" fill="none" stroke="#f26d33" stroke-width="10.5"/>
<path d="M330.42,429.02 A51,51 0 0 1 333.03,431.41" fill="none" stroke="#f16a31" stroke-width="10.5"/>
<path d="M332.65,431.04 A51,51 0 0 1 335.11,433.58" fill="none" stroke="#f1662e" stroke-width="10.5"/>
<path d="M334.75,433.18 A51,51 0 0 1 337.06,435.86" fill="none" stroke="#f0632c" stroke-width="10.5"/>
<path d="M336.72,435.45 A51,51 0 0 1 338.87,438.26" fill="none" stroke="#ef5f29" stroke-width="10.5"/>
<path d="M338.56,437.82 A51,51 0 0 1 340.54,440.76" fill="none" stroke="#ef5b27" stroke-width="10.5"/>
<path d="M340.25,440.30 A51,51 0 0 1 342.06,443.35" fill="none" stroke="#ee5824" stroke-width="10.5"/>
<path d="M341.80,442.88 A51,51 0 0 1 343.42,446.02" fill="none" stroke="#ed5422" stroke-width="10.5"/>
<path d="M343.19,445.54 A51,51 0 0 1 344.62,448.78" fill="none" stroke="#ed511f" stroke-width="10.5"/>
<path d="M344.42,448.28 A51,51 0 0 1 345.66,451.60" fill="none" stroke="#ec4d1d" stroke-width="10.5"/>
<path d="M345.49,451.09 A51,51 0 0 1 346.53,454.47" fill="none" stroke="#ea4a1b" stroke-width="10.5"/>
<path d="M346.39,453.96 A51,51 0 0 1 347.23,457.39" fill="none" stroke="#e8461b" stroke-width="10.5"/>
<path d="M347.12,456.87 A51,51 0 0 1 347.75,460.35" fill="none" stroke="#e5421a" stroke-width="10.5"/>
<path d="M347.67,459.82 A51,51 0 0 1 348.10,463.33" fill="none" stroke="#e33f19" stroke-width="10.5"/>
<path d="M348.05,462.80 A51,51 0 0 1 348.28,466.33" fill="none" stroke="#e03b18" stroke-width="10.5"/>
<path d="M348.26,465.80 A51,51 0 0 1 348.28,469.34" fill="none" stroke="#de3817" stroke-width="10.5"/>
<path d="M348.29,468.80 A51,51 0 0 1 348.10,472.33" fill="none" stroke="#db3416" stroke-width="10.5"/>
<path d="M348.14,471.80 A51,51 0 0 1 347.74,475.32" fill="none" stroke="#d93116" stroke-width="10.5"/>
<path d="M347.82,474.79 A51,51 0 0 1 347.21,478.27" fill="none" stroke="#d62d15" stroke-width="10.5"/>
<path d="M347.32,477.75 A51,51 0 0 1 346.51,481.19" fill="none" stroke="#d42a14" stroke-width="10.5"/>
<path d="M346.65,480.68 A51,51 0 0 1 345.64,484.07" fill="none" stroke="#d12714" stroke-width="10.5"/>
<path d="M345.80,483.56 A51,51 0 0 1 344.59,486.88" fill="none" stroke="#cf2413" stroke-width="10.5"/>
<path d="M344.79,486.39 A51,51 0 0 1 343.39,489.64" fill="none" stroke="#cc2213" stroke-width="10.5"/>
<path d="M343.62,489.15 A51,51 0 0 1 342.02,492.31" fill="none" stroke="#ca1f12" stroke-width="10.5"/>
<path d="M342.28,491.84 A51,51 0 0 1 340.50,494.90" fill="none" stroke="#c71c12" stroke-width="10.5"/>
<path d="M340.78,494.45 A51,51 0 0 1 338.83,497.40" fill="none" stroke="#c51911" stroke-width="10.5"/>
<path d="M339.14,496.96 A51,51 0 0 1 337.02,499.79" fill="none" stroke="#c21711" stroke-width="10.5"/>
<path d="M337.35,499.37 A51,51 0 0 1 335.07,502.07" fill="none" stroke="#c01411" stroke-width="10.5"/>
<path d="M335.42,501.68 A51,51 0 0 1 332.98,504.24" fill="none" stroke="#bd1110" stroke-width="10.5"/>
<circle cx="261.24" cy="503.86" r="5.25" fill="#32a032"/>
<circle cx="333.36" cy="503.86" r="5.25" fill="#bc1010"/>
<circle cx="297.3" cy="467.8" r="38.6" fill="#dcdcdc"/>
<line x1="298.15" y1="449.82" x2="298.95" y2="432.84" stroke="#8c8c8c" stroke-width="4"/>
<rect x="377.10" y="523.50" width="41.80" height="19.30" fill="#1c1c1c" stroke="#909090" stroke-width="1.2"/>
<rect x="243.30" y="545.00" width="109.50" height="28.10" fill="#1c1a1a" stroke="#6a6a6a" stroke-width="1.2"/>
<path d="M254.4,555.2 L266.7,555.2 L260.55,549.7 Z" fill="#f4f4f4"/>
<path d="M254.4,563 L266.7,563 L260.55,568.8 Z" fill="#f4f4f4"/>
<path d="M435.0,353.5 L679.6,353.5 L679.6,580.8000000000001 Q679.6,586.8000000000001 673.6,586.8000000000001 L441.0,586.8000000000001 Q435.0,586.8000000000001 435.0,580.8000000000001 Z" fill="#192a36"/>
<rect x="435.00" y="353.50" width="244.60" height="24.90" fill="#2d2c2b"/>
<path d="M435.0,353.5 L679.6,353.5 L679.6,580.8000000000001 Q679.6,586.8000000000001 673.6,586.8000000000001 L441.0,586.8000000000001 Q435.0,586.8000000000001 435.0,580.8000000000001 Z" fill="none" stroke="#8a8a8a" stroke-width="1.8"/>
<path d="M434.59999999999997,363.7 L434.59999999999997,353.09999999999997 L446.2,353.09999999999997" fill="none" stroke="#f4f4f4" stroke-width="2.8"/>
<path d="M668.4,353.09999999999997 L680.0,353.09999999999997 L680.0,363.7" fill="none" stroke="#f4f4f4" stroke-width="2.8"/>
<path d="M434.59999999999997,572.6 L434.59999999999997,582.6 Q434.59999999999997,587.2 439.2,587.2 L447.2,587.2" fill="none" stroke="#f4f4f4" stroke-width="2.8"/>
<path d="M667.4,587.2 L675.4,587.2 Q680.0,587.2 680.0,582.6 L680.0,572.6" fill="none" stroke="#f4f4f4" stroke-width="2.8"/>
<line x1="516.08" y1="509.32" x2="508.30" y2="517.10" stroke="#c8d2d8" stroke-width="1.35"/>
<line x1="512.34" y1="505.21" x2="506.56" y2="509.99" stroke="#c8d2d8" stroke-width="1.35"/>
<line x1="509.00" y1="500.76" x2="502.80" y2="504.98" stroke="#c8d2d8" stroke-width="1.35"/>
<line x1="506.10" y1="496.02" x2="499.53" y2="499.64" stroke="#c8d2d8" stroke-width="1.35"/>
<line x1="503.65" y1="491.03" x2="496.77" y2="494.01" stroke="#c8d2d8" stroke-width="1.35"/>
<line x1="501.69" y1="485.83" x2="491.23" y2="489.23" stroke="#c8d2d8" stroke-width="1.35"/>
<line x1="500.22" y1="480.47" x2="492.90" y2="482.11" stroke="#c8d2d8" stroke-width="1.35"/>
<line x1="499.27" y1="474.99" x2="491.82" y2="475.93" stroke="#c8d2d8" stroke-width="1.35"/>
<line x1="498.83" y1="469.45" x2="491.33" y2="469.69" stroke="#c8d2d8" stroke-width="1.35"/>
<line x1="498.92" y1="463.90" x2="491.43" y2="463.42" stroke="#c8d2d8" stroke-width="1.35"/>
<line x1="499.53" y1="458.37" x2="488.66" y2="456.65" stroke="#c8d2d8" stroke-width="1.35"/>
<line x1="500.65" y1="452.93" x2="493.39" y2="451.06" stroke="#c8d2d8" stroke-width="1.35"/>
<line x1="502.29" y1="447.61" x2="495.23" y2="445.07" stroke="#c8d2d8" stroke-width="1.35"/>
<line x1="504.42" y1="442.48" x2="497.63" y2="439.29" stroke="#c8d2d8" stroke-width="1.35"/>
<line x1="507.02" y1="437.57" x2="500.56" y2="433.75" stroke="#c8d2d8" stroke-width="1.35"/>
<line x1="510.07" y1="432.92" x2="501.17" y2="426.46" stroke="#c8d2d8" stroke-width="1.35"/>
<line x1="513.54" y1="428.58" x2="507.92" y2="423.62" stroke="#c8d2d8" stroke-width="1.35"/>
<line x1="517.41" y1="424.59" x2="512.28" y2="419.12" stroke="#c8d2d8" stroke-width="1.35"/>
<line x1="521.64" y1="420.98" x2="517.04" y2="415.05" stroke="#c8d2d8" stroke-width="1.35"/>
<line x1="526.19" y1="417.78" x2="522.17" y2="411.45" stroke="#c8d2d8" stroke-width="1.35"/>
<line x1="531.01" y1="415.03" x2="526.02" y2="405.23" stroke="#c8d2d8" stroke-width="1.35"/>
<line x1="536.08" y1="412.74" x2="533.32" y2="405.77" stroke="#c8d2d8" stroke-width="1.35"/>
<line x1="541.34" y1="410.94" x2="539.25" y2="403.74" stroke="#c8d2d8" stroke-width="1.35"/>
<line x1="546.74" y1="409.65" x2="545.34" y2="402.28" stroke="#c8d2d8" stroke-width="1.35"/>
<line x1="552.25" y1="408.86" x2="551.54" y2="401.40" stroke="#c8d2d8" stroke-width="1.35"/>
<line x1="557.80" y1="408.60" x2="557.80" y2="397.60" stroke="#c8d2d8" stroke-width="1.35"/>
<line x1="563.35" y1="408.86" x2="564.06" y2="401.40" stroke="#c8d2d8" stroke-width="1.35"/>
<line x1="568.86" y1="409.65" x2="570.26" y2="402.28" stroke="#c8d2d8" stroke-width="1.35"/>
<line x1="574.26" y1="410.94" x2="576.35" y2="403.74" stroke="#c8d2d8" stroke-width="1.35"/>
<line x1="579.52" y1="412.74" x2="582.28" y2="405.77" stroke="#c8d2d8" stroke-width="1.35"/>
<line x1="584.59" y1="415.03" x2="589.58" y2="405.23" stroke="#c8d2d8" stroke-width="1.35"/>
<line x1="589.41" y1="417.78" x2="593.43" y2="411.45" stroke="#c8d2d8" stroke-width="1.35"/>
<line x1="593.96" y1="420.98" x2="598.56" y2="415.05" stroke="#c8d2d8" stroke-width="1.35"/>
<line x1="598.19" y1="424.59" x2="603.32" y2="419.12" stroke="#c8d2d8" stroke-width="1.35"/>
<line x1="602.06" y1="428.58" x2="607.68" y2="423.62" stroke="#c8d2d8" stroke-width="1.35"/>
<line x1="605.53" y1="432.92" x2="614.43" y2="426.46" stroke="#c8d2d8" stroke-width="1.35"/>
<line x1="608.58" y1="437.57" x2="615.04" y2="433.75" stroke="#c8d2d8" stroke-width="1.35"/>
<line x1="611.18" y1="442.48" x2="617.97" y2="439.29" stroke="#c8d2d8" stroke-width="1.35"/>
<line x1="613.31" y1="447.61" x2="620.37" y2="445.07" stroke="#c8d2d8" stroke-width="1.35"/>
<line x1="614.95" y1="452.93" x2="622.21" y2="451.06" stroke="#c8d2d8" stroke-width="1.35"/>
<line x1="616.07" y1="458.37" x2="626.94" y2="456.65" stroke="#c8d2d8" stroke-width="1.35"/>
<line x1="616.68" y1="463.90" x2="624.17" y2="463.42" stroke="#c8d2d8" stroke-width="1.35"/>
<line x1="616.77" y1="469.45" x2="624.27" y2="469.69" stroke="#c8d2d8" stroke-width="1.35"/>
<line x1="616.33" y1="474.99" x2="623.78" y2="475.93" stroke="#c8d2d8" stroke-width="1.35"/>
<line x1="615.38" y1="480.47" x2="622.70" y2="482.11" stroke="#c8d2d8" stroke-width="1.35"/>
<line x1="613.91" y1="485.83" x2="624.37" y2="489.23" stroke="#c8d2d8" stroke-width="1.35"/>
<line x1="611.95" y1="491.03" x2="618.83" y2="494.01" stroke="#c8d2d8" stroke-width="1.35"/>
<line x1="609.50" y1="496.02" x2="616.07" y2="499.64" stroke="#c8d2d8" stroke-width="1.35"/>
<line x1="606.60" y1="500.76" x2="612.80" y2="504.98" stroke="#c8d2d8" stroke-width="1.35"/>
<line x1="603.26" y1="505.21" x2="609.04" y2="509.99" stroke="#c8d2d8" stroke-width="1.35"/>
<line x1="599.52" y1="509.32" x2="607.30" y2="517.10" stroke="#c8d2d8" stroke-width="1.35"/>
<path d="M521.74,503.66 A51,51 0 1 1 593.86,503.66" fill="none" stroke="#111a20" stroke-width="12" stroke-linecap="round"/>
<path d="M521.74,503.66 A51,51 0 0 1 519.32,501.08" fill="none" stroke="#36a235" stroke-width="10.5"/>
<path d="M519.68,501.48 A51,51 0 0 1 517.42,498.75" fill="none" stroke="#3da63a" stroke-width="10.5"/>
<path d="M517.75,499.17 A51,51 0 0 1 515.66,496.32" fill="none" stroke="#44aa3f" stroke-width="10.5"/>
<path d="M515.96,496.76 A51,51 0 0 1 514.04,493.79" fill="none" stroke="#4cae44" stroke-width="10.5"/>
<path d="M514.32,494.25 A51,51 0 0 1 512.57,491.17" fill="none" stroke="#53b249" stroke-width="10.5"/>
<path d="M512.82,491.64 A51,51 0 0 1 511.26,488.47" fill="none" stroke="#5ab64e" stroke-width="10.5"/>
<path d="M511.48,488.95 A51,51 0 0 1 510.12,485.69" fill="none" stroke="#62ba54" stroke-width="10.5"/>
<path d="M510.31,486.19 A51,51 0 0 1 509.13,482.85" fill="none" stroke="#69bd59" stroke-width="10.5"/>
<path d="M509.30,483.36 A51,51 0 0 1 508.32,479.96" fill="none" stroke="#70c15e" stroke-width="10.5"/>
<path d="M508.45,480.48 A51,51 0 0 1 507.68,477.03" fill="none" stroke="#78c563" stroke-width="10.5"/>
<path d="M507.78,477.55 A51,51 0 0 1 507.21,474.06" fill="none" stroke="#7fc968" stroke-width="10.5"/>
<path d="M507.28,474.59 A51,51 0 0 1 506.92,471.07" fill="none" stroke="#86cd6e" stroke-width="10.5"/>
<path d="M506.96,471.60 A51,51 0 0 1 506.80,468.07" fill="none" stroke="#8ed074" stroke-width="10.5"/>
<path d="M506.81,468.60 A51,51 0 0 1 506.86,465.06" fill="none" stroke="#96d37b" stroke-width="10.5"/>
<path d="M506.84,465.60 A51,51 0 0 1 507.10,462.07" fill="none" stroke="#9ed581" stroke-width="10.5"/>
<path d="M507.05,462.60 A51,51 0 0 1 507.51,459.09" fill="none" stroke="#a6d888" stroke-width="10.5"/>
<path d="M507.43,459.62 A51,51 0 0 1 508.10,456.15" fill="none" stroke="#aedb8e" stroke-width="10.5"/>
<path d="M507.98,456.67 A51,51 0 0 1 508.86,453.24" fill="none" stroke="#b6de94" stroke-width="10.5"/>
<path d="M508.71,453.76 A51,51 0 0 1 509.79,450.39" fill="none" stroke="#bde19b" stroke-width="10.5"/>
<path d="M509.61,450.89 A51,51 0 0 1 510.89,447.59" fill="none" stroke="#c5e4a1" stroke-width="10.5"/>
<path d="M510.68,448.08 A51,51 0 0 1 512.15,444.86" fill="none" stroke="#cde7a8" stroke-width="10.5"/>
<path d="M511.91,445.34 A51,51 0 0 1 513.57,442.22" fill="none" stroke="#d5e9ae" stroke-width="10.5"/>
<path d="M513.30,442.68 A51,51 0 0 1 515.14,439.66" fill="none" stroke="#dcecb4" stroke-width="10.5"/>
<path d="M514.85,440.10 A51,51 0 0 1 516.86,437.19" fill="none" stroke="#e0eab3" stroke-width="10.5"/>
<path d="M516.54,437.62 A51,51 0 0 1 518.72,434.83" fill="none" stroke="#e3e8b3" stroke-width="10.5"/>
<path d="M518.38,435.25 A51,51 0 0 1 520.71,432.59" fill="none" stroke="#e6e6b2" stroke-width="10.5"/>
<path d="M520.35,432.98 A51,51 0 0 1 522.84,430.47" fill="none" stroke="#e9e4b2" stroke-width="10.5"/>
<path d="M522.45,430.84 A51,51 0 0 1 525.09,428.47" fill="none" stroke="#ede2b1" stroke-width="10.5"/>
<path d="M524.68,428.82 A51,51 0 0 1 527.45,426.62" fill="none" stroke="#f0e0b1" stroke-width="10.5"/>
<path d="M527.02,426.94 A51,51 0 0 1 529.91,424.90" fill="none" stroke="#f3deb0" stroke-width="10.5"/>
<path d="M529.47,425.20 A51,51 0 0 1 532.47,423.33" fill="none" stroke="#f6dbaf" stroke-width="10.5"/>
<path d="M532.01,423.60 A51,51 0 0 1 535.12,421.92" fill="none" stroke="#f6d6a9" stroke-width="10.5"/>
<path d="M534.65,422.16 A51,51 0 0 1 537.85,420.66" fill="none" stroke="#f6d0a3" stroke-width="10.5"/>
<path d="M537.36,420.87 A51,51 0 0 1 540.65,419.57" fill="none" stroke="#f6ca9d" stroke-width="10.5"/>
<path d="M540.15,419.75 A51,51 0 0 1 543.51,418.64" fill="none" stroke="#f6c496" stroke-width="10.5"/>
<path d="M543.00,418.80 A51,51 0 0 1 546.41,417.89" fill="none" stroke="#f6be90" stroke-width="10.5"/>
<path d="M545.89,418.01 A51,51 0 0 1 549.36,417.30" fill="none" stroke="#f6b88a" stroke-width="10.5"/>
<path d="M548.83,417.39 A51,51 0 0 1 552.34,416.89" fill="none" stroke="#f6b384" stroke-width="10.5"/>
<path d="M551.81,416.95 A51,51 0 0 1 555.33,416.66" fill="none" stroke="#f6ad7d" stroke-width="10.5"/>
<path d="M554.80,416.69 A51,51 0 0 1 558.33,416.60" fill="none" stroke="#f6a777" stroke-width="10.5"/>
<path d="M557.80,416.60 A51,51 0 0 1 561.34,416.72" fill="none" stroke="#f6a171" stroke-width="10.5"/>
<path d="M560.80,416.69 A51,51 0 0 1 564.32,417.02" fill="none" stroke="#f69c69" stroke-width="10.5"/>
<path d="M563.79,416.95 A51,51 0 0 1 567.29,417.49" fill="none" stroke="#f59762" stroke-width="10.5"/>
<path d="M566.77,417.39 A51,51 0 0 1 570.22,418.14" fill="none" stroke="#f5925c" stroke-width="10.5"/>
<path d="M569.71,418.01 A51,51 0 0 1 573.11,418.95" fill="none" stroke="#f58c54" stroke-width="10.5"/>
<path d="M572.60,418.80 A51,51 0 0 1 575.95,419.94" fill="none" stroke="#f5874e" stroke-width="10.5"/>
<path d="M575.45,419.75 A51,51 0 0 1 578.73,421.09" fill="none" stroke="#f48246" stroke-width="10.5"/>
<path d="M578.24,420.87 A51,51 0 0 1 581.43,422.40" fill="none" stroke="#f47d3f" stroke-width="10.5"/>
<path d="M580.95,422.16 A51,51 0 0 1 584.05,423.87" fill="none" stroke="#f4783b" stroke-width="10.5"/>
<path d="M583.59,423.60 A51,51 0 0 1 586.58,425.49" fill="none" stroke="#f37538" stroke-width="10.5"/>
<path d="M586.13,425.20 A51,51 0 0 1 589.01,427.26" fill="none" stroke="#f27136" stroke-width="10.5"/>
<path d="M588.58,426.94 A51,51 0 0 1 591.33,429.17" fill="none" stroke="#f26d33" stroke-width="10.5"/>
<path d="M590.92,428.82 A51,51 0 0 1 593.53,431.21" fill="none" stroke="#f16a31" stroke-width="10.5"/>
<path d="M593.15,430.84 A51,51 0 0 1 595.61,433.38" fill="none" stroke="#f1662e" stroke-width="10.5"/>
<path d="M595.25,432.98 A51,51 0 0 1 597.56,435.66" fill="none" stroke="#f0632c" stroke-width="10.5"/>
<path d="M597.22,435.25 A51,51 0 0 1 599.37,438.06" fill="none" stroke="#ef5f29" stroke-width="10.5"/>
<path d="M599.06,437.62 A51,51 0 0 1 601.04,440.56" fill="none" stroke="#ef5b27" stroke-width="10.5"/>
<path d="M600.75,440.10 A51,51 0 0 1 602.56,443.15" fill="none" stroke="#ee5824" stroke-width="10.5"/>
<path d="M602.30,442.68 A51,51 0 0 1 603.92,445.82" fill="none" stroke="#ed5422" stroke-width="10.5"/>
<path d="M603.69,445.34 A51,51 0 0 1 605.12,448.58" fill="none" stroke="#ed511f" stroke-width="10.5"/>
<path d="M604.92,448.08 A51,51 0 0 1 606.16,451.40" fill="none" stroke="#ec4d1d" stroke-width="10.5"/>
<path d="M605.99,450.89 A51,51 0 0 1 607.03,454.27" fill="none" stroke="#ea4a1b" stroke-width="10.5"/>
<path d="M606.89,453.76 A51,51 0 0 1 607.73,457.19" fill="none" stroke="#e8461b" stroke-width="10.5"/>
<path d="M607.62,456.67 A51,51 0 0 1 608.25,460.15" fill="none" stroke="#e5421a" stroke-width="10.5"/>
<path d="M608.17,459.62 A51,51 0 0 1 608.60,463.13" fill="none" stroke="#e33f19" stroke-width="10.5"/>
<path d="M608.55,462.60 A51,51 0 0 1 608.78,466.13" fill="none" stroke="#e03b18" stroke-width="10.5"/>
<path d="M608.76,465.60 A51,51 0 0 1 608.78,469.14" fill="none" stroke="#de3817" stroke-width="10.5"/>
<path d="M608.79,468.60 A51,51 0 0 1 608.60,472.13" fill="none" stroke="#db3416" stroke-width="10.5"/>
<path d="M608.64,471.60 A51,51 0 0 1 608.24,475.12" fill="none" stroke="#d93116" stroke-width="10.5"/>
<path d="M608.32,474.59 A51,51 0 0 1 607.71,478.07" fill="none" stroke="#d62d15" stroke-width="10.5"/>
<path d="M607.82,477.55 A51,51 0 0 1 607.01,480.99" fill="none" stroke="#d42a14" stroke-width="10.5"/>
<path d="M607.15,480.48 A51,51 0 0 1 606.14,483.87" fill="none" stroke="#d12714" stroke-width="10.5"/>
<path d="M606.30,483.36 A51,51 0 0 1 605.09,486.68" fill="none" stroke="#cf2413" stroke-width="10.5"/>
<path d="M605.29,486.19 A51,51 0 0 1 603.89,489.44" fill="none" stroke="#cc2213" stroke-width="10.5"/>
<path d="M604.12,488.95 A51,51 0 0 1 602.52,492.11" fill="none" stroke="#ca1f12" stroke-width="10.5"/>
<path d="M602.78,491.64 A51,51 0 0 1 601.00,494.70" fill="none" stroke="#c71c12" stroke-width="10.5"/>
<path d="M601.28,494.25 A51,51 0 0 1 599.33,497.20" fill="none" stroke="#c51911" stroke-width="10.5"/>
<path d="M599.64,496.76 A51,51 0 0 1 597.52,499.59" fill="none" stroke="#c21711" stroke-width="10.5"/>
<path d="M597.85,499.17 A51,51 0 0 1 595.57,501.87" fill="none" stroke="#c01411" stroke-width="10.5"/>
<path d="M595.92,501.48 A51,51 0 0 1 593.48,504.04" fill="none" stroke="#bd1110" stroke-width="10.5"/>
<circle cx="521.74" cy="503.66" r="5.25" fill="#32a032"/>
<circle cx="593.86" cy="503.66" r="5.25" fill="#bc1010"/>
<circle cx="557.8" cy="467.6" r="38.6" fill="#dcdcdc"/>
<line x1="565.97" y1="451.56" x2="573.69" y2="436.41" stroke="#8c8c8c" stroke-width="4"/>
<rect x="633.60" y="523.50" width="41.30" height="19.30" fill="#1c1c1c" stroke="#909090" stroke-width="1.2"/>
<rect x="503.90" y="545.00" width="109.10" height="28.10" fill="#1c1a1a" stroke="#6a6a6a" stroke-width="1.2"/>
<path d="M514.4,555.2 L526.7,555.2 L520.55,549.7 Z" fill="#f4f4f4"/>
<path d="M514.4,563 L526.7,563 L520.55,568.8 Z" fill="#f4f4f4"/>
<rect x="533.80" y="102.30" width="154.70" height="2.20" fill="#5b93c7"/>
<text transform="translate(49.02,22.00) scale(1.035,1)" font-size="14.62" font-weight="bold" fill="#f6f6f2" stroke="#f6f6f2" stroke-width="0.000">Riden Power Supply Software</text>
<text transform="translate(38.12,60.80) scale(0.948,1)" font-size="10.34" font-weight="normal" fill="#f2f2f2" stroke="#f2f2f2" stroke-width="0.259">Basic Functions</text>
<text transform="translate(140.19,60.80) scale(0.980,1)" font-size="10.34" font-weight="normal" fill="#f2f2f2" stroke="#f2f2f2" stroke-width="0.259">Firmware Update</text>
<text transform="translate(256.17,60.80) scale(1.000,1)" font-size="10.34" font-weight="normal" fill="#f2f2f2" stroke="#f2f2f2" stroke-width="0.259">Logo Update</text>
<text transform="translate(353.93,60.80) scale(1.006,1)" font-size="10.34" font-weight="normal" fill="#f2f2f2" stroke="#f2f2f2" stroke-width="0.259">Software Update</text>
<text transform="translate(476.69,60.80) scale(0.935,1)" font-size="10.87" font-weight="normal" fill="#f2f2f2" stroke="#f2f2f2" stroke-width="0.272">Language</text>
<text transform="translate(592.70,60.80) scale(1.011,1)" font-size="10.34" font-weight="normal" fill="#f2f2f2" stroke="#f2f2f2" stroke-width="0.259">About</text>
<text transform="translate(30.88,92.20) scale(0.851,1)" font-size="11.21" font-weight="normal" fill="#4f8fd0" stroke="#4f8fd0" stroke-width="0.280">USB</text>
<text transform="translate(117.00,92.20) scale(0.821,1)" font-size="11.45" font-weight="normal" fill="#8c8c8c" stroke="#8c8c8c" stroke-width="0.286">WIFI</text>
<text transform="translate(72.80,131.00) scale(1.027,1)" font-size="11.01" font-weight="normal" fill="#e2e6e8" stroke="#e2e6e8" stroke-width="0.275">Port</text>
<text transform="translate(50.57,156.90) scale(1.043,1)" font-size="16.00" font-weight="normal" fill="#a0a0a0" stroke="#a0a0a0" stroke-width="0.300">COM7</text>
<text transform="translate(58.65,179.20) scale(1.015,1)" font-size="10.48" font-weight="normal" fill="#e2e6e8" stroke="#e2e6e8" stroke-width="0.262">Baud Rate</text>
<text transform="translate(47.32,203.80) scale(1.069,1)" font-size="16.00" font-weight="normal" fill="#a0a0a0" stroke="#a0a0a0" stroke-width="0.300">115200</text>
<text transform="translate(49.53,226.30) scale(0.908,1)" font-size="11.59" font-weight="normal" fill="#e2e6e8" stroke="#e2e6e8" stroke-width="0.290">Slave Address</text>
<text transform="translate(83.86,252.90) scale(0.975,1)" font-size="21.57" font-weight="normal" fill="#a0a0a0" stroke="#a0a0a0" stroke-width="0.300">001</text>
<text transform="translate(46.78,277.60) scale(1.098,1)" font-size="10.48" font-weight="normal" fill="#e2e6e8" stroke="#e2e6e8" stroke-width="0.262">Product Model</text>
<text transform="translate(57.69,302.70) scale(1.009,1)" font-size="16.29" font-weight="normal" fill="#f4f4f4" stroke="#f4f4f4" stroke-width="0.300">RD6006</text>
<text transform="translate(48.10,324.50) scale(1.068,1)" font-size="10.34" font-weight="normal" fill="#e2e6e8" stroke="#e2e6e8" stroke-width="0.259">Serial Number</text>
<text transform="translate(50.41,349.60) scale(1.004,1)" font-size="16.71" font-weight="normal" fill="#f4f4f4" stroke="#f4f4f4" stroke-width="0.300">00001717</text>
<text transform="translate(41.02,371.80) scale(1.045,1)" font-size="10.48" font-weight="normal" fill="#e2e6e8" stroke="#e2e6e8" stroke-width="0.262">Firmware Version</text>
<text transform="translate(67.80,396.90) scale(0.972,1)" font-size="16.29" font-weight="normal" fill="#f4f4f4" stroke="#f4f4f4" stroke-width="0.300">V1.25</text>
<text transform="translate(54.40,418.00) scale(1.098,1)" font-size="10.21" font-weight="normal" fill="#e2e6e8" stroke="#e2e6e8" stroke-width="0.255">Pattern Info</text>
<text transform="translate(18.46,437.00) scale(0.917,1)" font-size="11.45" font-weight="normal" fill="#dcdcdc" stroke="#dcdcdc" stroke-width="0.286">Now is app pattern!</text>
<text transform="translate(36.07,542.60) scale(0.957,1)" font-size="10.90" font-weight="normal" fill="#e2e6e8" stroke="#e2e6e8" stroke-width="0.272">Key Lock</text>
<text transform="translate(58.78,570.70) scale(1.012,1)" font-size="15.03" font-weight="normal" fill="#d4f0ff" stroke="#d4f0ff" stroke-width="0.300">Disconnect</text>
<text transform="translate(256.26,99.00) scale(1.024,1)" font-size="11.72" font-weight="normal" fill="#f0f0f0" stroke="#f0f0f0" stroke-width="0.293">Output Voltage And Current Graph</text>
<text transform="translate(172.02,306.00) scale(1.042,1)" font-size="10.29" font-weight="normal" fill="#333" stroke="#333" stroke-width="0.257">0</text>
<text transform="translate(171.50,268.16) scale(1.146,1)" font-size="10.43" font-weight="normal" fill="#333" stroke="#333" stroke-width="0.261">1</text>
<text transform="translate(171.83,230.32) scale(1.099,1)" font-size="10.29" font-weight="normal" fill="#333" stroke="#333" stroke-width="0.257">2</text>
<text transform="translate(172.02,192.48) scale(1.053,1)" font-size="10.29" font-weight="normal" fill="#333" stroke="#333" stroke-width="0.257">3</text>
<text transform="translate(172.20,154.64) scale(0.977,1)" font-size="10.43" font-weight="normal" fill="#333" stroke="#333" stroke-width="0.261">4</text>
<text transform="translate(171.96,116.80) scale(1.049,1)" font-size="10.43" font-weight="normal" fill="#333" stroke="#333" stroke-width="0.261">5</text>
<text transform="translate(212.04,323.90) scale(0.914,1)" font-size="11.14" font-weight="normal" fill="#333" stroke="#333" stroke-width="0.279">10</text>
<text transform="translate(245.30,323.90) scale(0.892,1)" font-size="11.14" font-weight="normal" fill="#333" stroke="#333" stroke-width="0.279">20</text>
<text transform="translate(278.46,323.90) scale(0.879,1)" font-size="11.14" font-weight="normal" fill="#333" stroke="#333" stroke-width="0.279">30</text>
<text transform="translate(311.61,323.90) scale(0.867,1)" font-size="11.14" font-weight="normal" fill="#333" stroke="#333" stroke-width="0.279">40</text>
<text transform="translate(344.41,323.90) scale(0.883,1)" font-size="11.14" font-weight="normal" fill="#333" stroke="#333" stroke-width="0.279">50</text>
<text transform="translate(377.30,323.90) scale(0.892,1)" font-size="11.14" font-weight="normal" fill="#333" stroke="#333" stroke-width="0.279">60</text>
<text transform="translate(410.30,323.90) scale(0.892,1)" font-size="11.14" font-weight="normal" fill="#333" stroke="#333" stroke-width="0.279">70</text>
<text transform="translate(443.41,323.90) scale(0.890,1)" font-size="11.06" font-weight="normal" fill="#333" stroke="#333" stroke-width="0.277">80</text>
<text transform="translate(476.35,323.90) scale(0.888,1)" font-size="11.14" font-weight="normal" fill="#333" stroke="#333" stroke-width="0.279">90</text>
<text transform="translate(506.29,323.90) scale(0.905,1)" font-size="11.14" font-weight="normal" fill="#333" stroke="#333" stroke-width="0.279">100</text>
<text transform="translate(309.19,337.00) scale(1.050,1)" font-size="9.66" font-weight="normal" fill="#333" stroke="#333" stroke-width="0.241">Read Number(Num)</text>
<text transform="translate(424.54,136.00) scale(0.936,1)" font-size="11.03" font-weight="normal" fill="#333" stroke="#333" stroke-width="0.276">Output Voltage(V)</text>
<text transform="translate(424.54,150.00) scale(0.936,1)" font-size="11.03" font-weight="normal" fill="#333" stroke="#333" stroke-width="0.276">Output Current(A)</text>
<text transform="translate(575.02,131.80) scale(1.007,1)" font-size="12.14" font-weight="normal" fill="#f0f0f0" stroke="#f0f0f0" stroke-width="0.300">Battery Info</text>
<text transform="translate(546.21,155.50) scale(0.865,1)" font-size="11.45" font-weight="normal" fill="#eef0f0" stroke="#eef0f0" stroke-width="0.286">No Access</text>
<text transform="translate(553.00,185.00) scale(1.011,1)" font-size="10.21" font-weight="normal" fill="#eef0f0" stroke="#eef0f0" stroke-width="0.255">Voltage</text>
<text transform="translate(615.87,186.00) scale(0.942,1)" font-size="13.14" font-weight="normal" fill="#f4f4f4" stroke="#f4f4f4" stroke-width="0.300">00.00</text>
<text transform="translate(664.90,186.00) scale(0.818,1)" font-size="12.32" font-weight="normal" fill="#eef0f0" stroke="#eef0f0" stroke-width="0.300">V</text>
<text transform="translate(545.82,220.60) scale(0.874,1)" font-size="10.50" font-weight="normal" fill="#eef0f0" stroke="#eef0f0" stroke-width="0.263">Temperature</text>
<text transform="translate(615.68,222.00) scale(0.955,1)" font-size="13.05" font-weight="normal" fill="#f4f4f4" stroke="#f4f4f4" stroke-width="0.300">28.00</text>
<text transform="translate(662.62,222.00) scale(0.816,1)" font-size="12.86" font-weight="normal" fill="#eef0f0" stroke="#eef0f0" stroke-width="0.300">°C</text>
<text transform="translate(615.80,258.00) scale(0.954,1)" font-size="13.05" font-weight="normal" fill="#f4f4f4" stroke="#f4f4f4" stroke-width="0.300">83.00</text>
<text transform="translate(663.04,258.00) scale(0.769,1)" font-size="13.14" font-weight="normal" fill="#eef0f0" stroke="#eef0f0" stroke-width="0.300">°F</text>
<text transform="translate(546.12,293.00) scale(1.033,1)" font-size="10.34" font-weight="normal" fill="#eef0f0" stroke="#eef0f0" stroke-width="0.259">Output Ah</text>
<text transform="translate(609.79,293.00) scale(0.891,1)" font-size="13.14" font-weight="normal" fill="#f4f4f4" stroke="#f4f4f4" stroke-width="0.300">000.000</text>
<text transform="translate(662.70,293.00) scale(0.894,1)" font-size="12.41" font-weight="normal" fill="#eef0f0" stroke="#eef0f0" stroke-width="0.300">Ah</text>
<text transform="translate(544.51,330.00) scale(0.931,1)" font-size="11.59" font-weight="normal" fill="#eef0f0" stroke="#eef0f0" stroke-width="0.290">Output Wh</text>
<text transform="translate(609.79,329.00) scale(0.891,1)" font-size="13.14" font-weight="normal" fill="#f4f4f4" stroke="#f4f4f4" stroke-width="0.300">000.000</text>
<text transform="translate(662.70,329.00) scale(0.869,1)" font-size="11.03" font-weight="normal" fill="#eef0f0" stroke="#eef0f0" stroke-width="0.276">Wh</text>
<text transform="translate(749.61,131.60) scale(0.997,1)" font-size="11.86" font-weight="normal" fill="#f0f0f0" stroke="#f0f0f0" stroke-width="0.297">Call Out</text>
<text transform="translate(726.92,185.80) scale(0.884,1)" font-size="12.46" font-weight="normal" fill="#f6f6f6" stroke="#f6f6f6" stroke-width="0.300">Data1</text>
<text transform="translate(799.12,185.80) scale(0.896,1)" font-size="12.29" font-weight="normal" fill="#f6f6f6" stroke="#f6f6f6" stroke-width="0.300">Data2</text>
<text transform="translate(726.92,222.10) scale(0.895,1)" font-size="12.29" font-weight="normal" fill="#f6f6f6" stroke="#f6f6f6" stroke-width="0.300">Data3</text>
<text transform="translate(799.13,222.10) scale(0.877,1)" font-size="12.46" font-weight="normal" fill="#f6f6f6" stroke="#f6f6f6" stroke-width="0.300">Data4</text>
<text transform="translate(726.92,257.80) scale(0.882,1)" font-size="12.46" font-weight="normal" fill="#f6f6f6" stroke="#f6f6f6" stroke-width="0.300">Data5</text>
<text transform="translate(799.12,257.80) scale(0.895,1)" font-size="12.29" font-weight="normal" fill="#f6f6f6" stroke="#f6f6f6" stroke-width="0.300">Data6</text>
<text transform="translate(726.92,293.30) scale(0.884,1)" font-size="12.46" font-weight="normal" fill="#f6f6f6" stroke="#f6f6f6" stroke-width="0.300">Data7</text>
<text transform="translate(799.12,293.30) scale(0.901,1)" font-size="12.20" font-weight="normal" fill="#f6f6f6" stroke="#f6f6f6" stroke-width="0.300">Data8</text>
<text transform="translate(763.32,329.00) scale(0.896,1)" font-size="12.29" font-weight="normal" fill="#f6f6f6" stroke="#f6f6f6" stroke-width="0.300">Data9</text>
<text transform="translate(745.17,372.20) scale(0.879,1)" font-size="12.83" font-weight="normal" fill="#f0f0f0" stroke="#f0f0f0" stroke-width="0.300">Time Sync</text>
<text transform="translate(745.79,446.70) scale(0.880,1)" font-size="12.00" font-weight="normal" fill="#f6f6f6" stroke="#f6f6f6" stroke-width="0.300">Time Sync</text>
<text transform="translate(747.16,494.80) scale(0.972,1)" font-size="12.14" font-weight="normal" fill="#f0f0f0" stroke="#f0f0f0" stroke-width="0.300">Backlight</text>
<text transform="translate(707.47,573.30) scale(0.869,1)" font-size="12.57" font-weight="normal" fill="#e6eaec" stroke="#e6eaec" stroke-width="0.300">0</text>
<text transform="translate(730.78,573.30) scale(0.757,1)" font-size="12.75" font-weight="normal" fill="#e6eaec" stroke="#e6eaec" stroke-width="0.300">1</text>
<text transform="translate(753.17,573.30) scale(0.917,1)" font-size="12.57" font-weight="normal" fill="#e6eaec" stroke="#e6eaec" stroke-width="0.300">2</text>
<text transform="translate(776.16,573.30) scale(0.878,1)" font-size="12.57" font-weight="normal" fill="#e6eaec" stroke="#e6eaec" stroke-width="0.300">3</text>
<text transform="translate(798.74,573.30) scale(0.815,1)" font-size="12.75" font-weight="normal" fill="#e6eaec" stroke="#e6eaec" stroke-width="0.300">4</text>
<text transform="translate(824.80,573.30) scale(0.875,1)" font-size="12.75" font-weight="normal" fill="#e6eaec" stroke="#e6eaec" stroke-width="0.300">5</text>
<text transform="translate(906.44,98.80) scale(1.046,1)" font-size="12.00" font-weight="normal" fill="#f0f0f0" stroke="#f0f0f0" stroke-width="0.300">Output Info</text>
<text transform="translate(878.76,121.40) scale(1.113,1)" font-size="10.34" font-weight="normal" fill="#eef0f0" stroke="#eef0f0" stroke-width="0.259">Input Voltage</text>
<text transform="translate(899.08,146.50) scale(1.039,1)" font-size="15.89" font-weight="normal" fill="#f6f6f6" stroke="#f6f6f6" stroke-width="0.300">26.89</text>
<text transform="translate(972.30,147.40) scale(1.128,1)" font-size="13.33" font-weight="normal" fill="#eef0f0" stroke="#eef0f0" stroke-width="0.300">V</text>
<text transform="translate(880.88,168.80) scale(0.950,1)" font-size="12.14" font-weight="normal" fill="#eef0f0" stroke="#eef0f0" stroke-width="0.300">Output Voltage</text>
<text transform="translate(899.22,194.00) scale(1.043,1)" font-size="16.00" font-weight="normal" fill="#f6f6f6" stroke="#f6f6f6" stroke-width="0.300">05.09</text>
<text transform="translate(972.50,194.70) scale(1.084,1)" font-size="12.90" font-weight="normal" fill="#eef0f0" stroke="#eef0f0" stroke-width="0.300">V</text>
<text transform="translate(880.89,215.80) scale(0.936,1)" font-size="12.14" font-weight="normal" fill="#eef0f0" stroke="#eef0f0" stroke-width="0.300">Output Current</text>
<text transform="translate(899.22,240.90) scale(1.039,1)" font-size="16.00" font-weight="normal" fill="#f6f6f6" stroke="#f6f6f6" stroke-width="0.300">0.000</text>
<text transform="translate(973.00,241.70) scale(1.007,1)" font-size="13.04" font-weight="normal" fill="#eef0f0" stroke="#eef0f0" stroke-width="0.300">A</text>
<text transform="translate(880.90,263.00) scale(0.891,1)" font-size="12.57" font-weight="normal" fill="#eef0f0" stroke="#eef0f0" stroke-width="0.300">Output Power</text>
<text transform="translate(899.22,287.60) scale(1.039,1)" font-size="16.00" font-weight="normal" fill="#f6f6f6" stroke="#f6f6f6" stroke-width="0.300">00.00</text>
<text transform="translate(972.50,288.00) scale(1.200,1)" font-size="12.61" font-weight="normal" fill="#eef0f0" stroke="#eef0f0" stroke-width="0.300">W</text>
<text transform="translate(880.91,309.60) scale(0.922,1)" font-size="11.77" font-weight="normal" fill="#eef0f0" stroke="#eef0f0" stroke-width="0.294">System Temperature</text>
<text transform="translate(899.22,335.20) scale(1.039,1)" font-size="16.00" font-weight="normal" fill="#f6f6f6" stroke="#f6f6f6" stroke-width="0.300">30.00</text>
<text transform="translate(971.67,334.70) scale(1.171,1)" font-size="12.86" font-weight="normal" fill="#eef0f0" stroke="#eef0f0" stroke-width="0.300">°C</text>
<text transform="translate(899.13,374.10) scale(1.048,1)" font-size="15.89" font-weight="normal" fill="#f6f6f6" stroke="#f6f6f6" stroke-width="0.300">86.00</text>
<text transform="translate(971.65,374.00) scale(1.237,1)" font-size="12.57" font-weight="normal" fill="#eef0f0" stroke="#eef0f0" stroke-width="0.300">°F</text>
<text transform="translate(868.02,416.80) scale(1.045,1)" font-size="9.38" font-weight="normal" fill="#eef0f0" stroke="#eef0f0" stroke-width="0.234">Normal</text>
<text transform="translate(872.93,461.50) scale(0.869,1)" font-size="12.00" font-weight="normal" fill="#eef0f0" stroke="#eef0f0" stroke-width="0.300">OVP</text>
<text transform="translate(872.94,497.00) scale(0.845,1)" font-size="12.00" font-weight="normal" fill="#eef0f0" stroke="#eef0f0" stroke-width="0.300">OCP</text>
<text transform="translate(872.92,532.40) scale(0.893,1)" font-size="12.00" font-weight="normal" fill="#eef0f0" stroke="#eef0f0" stroke-width="0.300">OTP</text>
<text transform="translate(949.58,497.00) scale(0.866,1)" font-size="12.00" font-weight="normal" fill="#eef0f0" stroke="#eef0f0" stroke-width="0.300">CV</text>
<text transform="translate(949.59,532.40) scale(0.853,1)" font-size="12.00" font-weight="normal" fill="#eef0f0" stroke="#eef0f0" stroke-width="0.300">CC</text>
<text transform="translate(925.17,570.90) scale(1.190,1)" font-size="15.59" font-weight="normal" fill="#e0f4ff" stroke="#e0f4ff" stroke-width="0.300">Off</text>
<text transform="translate(281.90,371.00) scale(0.996,1)" font-size="11.91" font-weight="normal" fill="#f0f0f0" stroke="#f0f0f0" stroke-width="0.298">V-Set</text>
<text transform="translate(225.20,534.70) scale(0.933,1)" font-size="9.14" font-weight="normal" fill="#e8ecee" stroke="#e8ecee" stroke-width="0.229">0.00</text>
<text transform="translate(204.62,501.20) scale(0.924,1)" font-size="9.14" font-weight="normal" fill="#e8ecee" stroke="#e8ecee" stroke-width="0.229">1.00</text>
<text transform="translate(200.97,460.90) scale(0.941,1)" font-size="9.14" font-weight="normal" fill="#e8ecee" stroke="#e8ecee" stroke-width="0.229">2.00</text>
<text transform="translate(216.61,424.20) scale(0.922,1)" font-size="9.14" font-weight="normal" fill="#e8ecee" stroke="#e8ecee" stroke-width="0.229">3.00</text>
<text transform="translate(247.18,398.20) scale(0.908,1)" font-size="9.14" font-weight="normal" fill="#e8ecee" stroke="#e8ecee" stroke-width="0.229">4.00</text>
<text transform="translate(285.96,389.10) scale(0.924,1)" font-size="9.14" font-weight="normal" fill="#e8ecee" stroke="#e8ecee" stroke-width="0.229">5.00</text>
<text transform="translate(324.16,398.20) scale(0.953,1)" font-size="9.14" font-weight="normal" fill="#e8ecee" stroke="#e8ecee" stroke-width="0.229">6.00</text>
<text transform="translate(355.58,424.00) scale(0.917,1)" font-size="9.14" font-weight="normal" fill="#e8ecee" stroke="#e8ecee" stroke-width="0.229">7.00</text>
<text transform="translate(369.91,460.90) scale(0.948,1)" font-size="9.08" font-weight="normal" fill="#e8ecee" stroke="#e8ecee" stroke-width="0.227">8.00</text>
<text transform="translate(367.21,501.20) scale(0.938,1)" font-size="9.14" font-weight="normal" fill="#e8ecee" stroke="#e8ecee" stroke-width="0.229">9.00</text>
<text transform="translate(346.48,534.70) scale(0.906,1)" font-size="9.14" font-weight="normal" fill="#e8ecee" stroke="#e8ecee" stroke-width="0.229">10.00</text>
<text transform="translate(293.80,520.00) scale(0.839,1)" font-size="10.58" font-weight="normal" fill="#e8ecee" stroke="#e8ecee" stroke-width="0.264">V</text>
<text transform="translate(378.12,516.30) scale(1.005,1)" font-size="8.41" font-weight="normal" fill="#e8ecee" stroke="#e8ecee" stroke-width="0.210">Max Value</text>
<text transform="translate(386.48,537.60) scale(0.856,1)" font-size="11.14" font-weight="normal" fill="#f0f0f0" stroke="#f0f0f0" stroke-width="0.279">10.00</text>
<text transform="translate(285.85,564.90) scale(1.021,1)" font-size="20.86" font-weight="normal" fill="#f6f6f6" stroke="#f6f6f6" stroke-width="0.300">05.10</text>
<text transform="translate(365.70,566.90) scale(0.947,1)" font-size="16.52" font-weight="normal" fill="#e8ecee" stroke="#e8ecee" stroke-width="0.300">V</text>
<text transform="translate(544.08,371.00) scale(1.043,1)" font-size="11.91" font-weight="normal" fill="#f0f0f0" stroke="#f0f0f0" stroke-width="0.298">I-Set</text>
<text transform="translate(486.00,535.40) scale(0.927,1)" font-size="9.14" font-weight="normal" fill="#e8ecee" stroke="#e8ecee" stroke-width="0.229">0.000</text>
<text transform="translate(465.05,501.20) scale(0.940,1)" font-size="9.14" font-weight="normal" fill="#e8ecee" stroke="#e8ecee" stroke-width="0.229">0.500</text>
<text transform="translate(462.02,460.90) scale(0.919,1)" font-size="9.14" font-weight="normal" fill="#e8ecee" stroke="#e8ecee" stroke-width="0.229">1.000</text>
<text transform="translate(477.43,424.20) scale(0.910,1)" font-size="9.14" font-weight="normal" fill="#e8ecee" stroke="#e8ecee" stroke-width="0.229">1.500</text>
<text transform="translate(507.48,398.20) scale(0.914,1)" font-size="9.14" font-weight="normal" fill="#e8ecee" stroke="#e8ecee" stroke-width="0.229">2.000</text>
<text transform="translate(545.77,389.10) scale(0.932,1)" font-size="9.14" font-weight="normal" fill="#e8ecee" stroke="#e8ecee" stroke-width="0.229">2.500</text>
<text transform="translate(585.66,398.20) scale(0.904,1)" font-size="9.14" font-weight="normal" fill="#e8ecee" stroke="#e8ecee" stroke-width="0.229">3.000</text>
<text transform="translate(615.61,424.20) scale(0.918,1)" font-size="9.14" font-weight="normal" fill="#e8ecee" stroke="#e8ecee" stroke-width="0.229">3.500</text>
<text transform="translate(630.73,460.90) scale(0.921,1)" font-size="9.14" font-weight="normal" fill="#e8ecee" stroke="#e8ecee" stroke-width="0.229">4.000</text>
<text transform="translate(628.04,501.20) scale(0.885,1)" font-size="9.14" font-weight="normal" fill="#e8ecee" stroke="#e8ecee" stroke-width="0.229">4.500</text>
<text transform="translate(606.92,535.40) scale(0.906,1)" font-size="9.14" font-weight="normal" fill="#e8ecee" stroke="#e8ecee" stroke-width="0.229">5.000</text>
<text transform="translate(554.30,520.00) scale(0.988,1)" font-size="10.58" font-weight="normal" fill="#e8ecee" stroke="#e8ecee" stroke-width="0.264">A</text>
<text transform="translate(634.22,516.30) scale(1.016,1)" font-size="8.41" font-weight="normal" fill="#e8ecee" stroke="#e8ecee" stroke-width="0.210">Max Value</text>
<text transform="translate(641.90,537.60) scale(0.906,1)" font-size="11.14" font-weight="normal" fill="#f0f0f0" stroke="#f0f0f0" stroke-width="0.279">5.000</text>
<text transform="translate(545.85,564.90) scale(1.021,1)" font-size="20.86" font-weight="normal" fill="#f6f6f6" stroke="#f6f6f6" stroke-width="0.300">3.000</text>
<text transform="translate(625.70,566.90) scale(0.976,1)" font-size="16.52" font-weight="normal" fill="#e8ecee" stroke="#e8ecee" stroke-width="0.300">A</text>
<text transform="translate(564.17,92.70) scale(0.942,1)" font-size="11.03" font-weight="normal" fill="#4f8fd0" stroke="#4f8fd0" stroke-width="0.276">Battery Info/Call Out</text>
<text transform="translate(739.67,92.70) scale(0.923,1)" font-size="11.31" font-weight="normal" fill="#f2f2f2" stroke="#f2f2f2" stroke-width="0.283">Mark Calibration</text>
</svg></body></html>
